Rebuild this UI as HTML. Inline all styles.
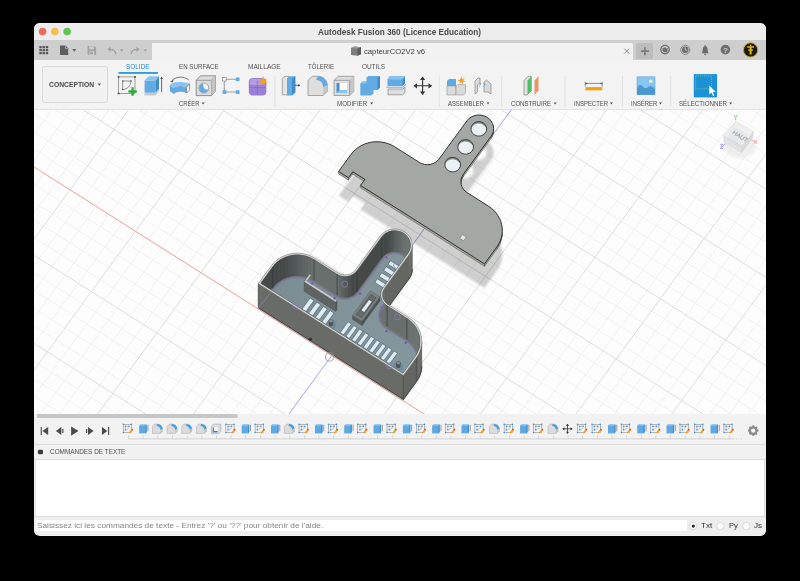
<!DOCTYPE html>
<html><head><meta charset="utf-8"><style>
*{margin:0;padding:0;box-sizing:border-box}
html,body{width:800px;height:581px;background:#000;overflow:hidden}
body{position:relative;font-family:"Liberation Sans",sans-serif}
.a{position:absolute}
.t{position:absolute;white-space:nowrap;transform-origin:0 0}
svg{position:absolute;left:0;top:0}
</style></head><body>
<div class="a" style="left:34px;top:23px;width:732px;height:512.5px;border-radius:6px;overflow:hidden;background:#f2f2f2"><div class="a" style="left:0px;top:0px;width:732px;height:17px;background:#eeedee"></div><div class="a" style="left:0px;top:17px;width:732px;height:19.5px;background:#cecece"></div><div class="a" style="left:117.6px;top:20.0px;width:481px;height:16.5px;background:#f2f2f2;border-radius:0 2px 0 0"></div><div class="a" style="left:602.3px;top:20.2px;width:16.6px;height:16.3px;background:#bdbdbd;border-radius:2px 2px 0 0"></div><div class="a" style="left:0px;top:36.5px;width:732px;height:50px;background:#f3f3f3"></div><div class="a" style="left:7.5px;top:43.4px;width:66.2px;height:36.9px;background:#f1f1f1;border:0.8px solid #dadada;border-radius:2.2px"></div><div class="a" style="left:0px;top:86.5px;width:732px;height:304.5px;background:#fdfdfd"></div><div class="a" style="left:0px;top:86px;width:732px;height:0.6px;background:#e2e2e2"></div><div class="a" style="left:0px;top:391px;width:732px;height:30px;background:#f2f2f2"></div><div class="a" style="left:2.5px;top:390.8px;width:201px;height:4.2px;background:#c6c6c6;border-radius:0 2px 2px 0"></div><div class="a" style="left:0px;top:421px;width:732px;height:15.5px;background:#f1f1f1;border-top:1px solid #dedede;border-bottom:1px solid #dadada"></div><div class="a" style="left:1px;top:436.5px;width:730px;height:57px;background:#ffffff;border-right:1px solid #d9d9d9;border-left:1px solid #e2e2e2"></div><div class="a" style="left:0px;top:493.3px;width:732px;height:19.2px;background:#eeeeee;border-top:1px solid #dcdcdc"></div><div class="a" style="left:1.5px;top:496.75px;width:651.5px;height:11.5px;background:#ffffff"></div></div><div class="t" style="left:318.10px;top:27.70px;font-size:8.5px;line-height:8.5px;color:#4b4b4b;font-weight:bold;transform:scaleX(0.9671);">Autodesk Fusion 360 (Licence Education)</div><div class="t" style="left:363.90px;top:48.08px;font-size:7.7px;line-height:7.7px;color:#3a3a3a;transform:scaleX(0.9998);">capteurCO2V2 v6</div><div class="t" style="left:49.00px;top:82.16px;font-size:6.9px;line-height:6.9px;color:#484848;font-weight:bold;transform:scaleX(0.9821);">CONCEPTION</div><div class="t" style="left:126.30px;top:64.31px;font-size:6.6px;line-height:6.6px;color:#1d8fd3;transform:scaleX(0.9743);">SOLIDE</div><div class="t" style="left:178.90px;top:64.31px;font-size:6.6px;line-height:6.6px;color:#505050;transform:scaleX(0.9437);">EN SURFACE</div><div class="t" style="left:247.70px;top:64.31px;font-size:6.6px;line-height:6.6px;color:#505050;transform:scaleX(0.9909);">MAILLAGE</div><div class="t" style="left:308.30px;top:64.31px;font-size:6.6px;line-height:6.6px;color:#505050;transform:scaleX(0.9204);">TÔLERIE</div><div class="t" style="left:361.50px;top:64.31px;font-size:6.6px;line-height:6.6px;color:#505050;transform:scaleX(0.9695);">OUTILS</div><div class="t" style="left:179.20px;top:100.51px;font-size:6.6px;line-height:6.6px;color:#505050;transform:scaleX(0.8874);">CRÉER</div><div class="t" style="left:336.70px;top:100.51px;font-size:6.6px;line-height:6.6px;color:#505050;transform:scaleX(0.9357);">MODIFIER</div><div class="t" style="left:448.20px;top:100.51px;font-size:6.6px;line-height:6.6px;color:#505050;transform:scaleX(0.8927);">ASSEMBLER</div><div class="t" style="left:510.50px;top:100.51px;font-size:6.6px;line-height:6.6px;color:#505050;transform:scaleX(0.9192);">CONSTRUIRE</div><div class="t" style="left:573.90px;top:100.51px;font-size:6.6px;line-height:6.6px;color:#505050;transform:scaleX(0.9033);">INSPECTER</div><div class="t" style="left:630.50px;top:100.51px;font-size:6.6px;line-height:6.6px;color:#505050;transform:scaleX(0.8921);">INSÉRER</div><div class="t" style="left:678.80px;top:100.51px;font-size:6.6px;line-height:6.6px;color:#505050;transform:scaleX(0.9348);">SÉLECTIONNER</div><div class="t" style="left:49.75px;top:449.17px;font-size:6.3px;line-height:6.3px;color:#4e4e4e;transform:scaleX(1.0177);">COMMANDES DE TEXTE</div><div class="t" style="left:36.75px;top:521.81px;font-size:7.9px;line-height:7.9px;color:#858585;transform:scaleX(1.0488);">Saisissez ici les commandes de texte - Entrez '?' ou '??' pour obtenir de l'aide.</div><div class="t" style="left:701.00px;top:522.00px;font-size:7.8px;line-height:7.8px;color:#333333;transform:scaleX(1.0422);">Txt</div><div class="t" style="left:728.60px;top:522.00px;font-size:7.8px;line-height:7.8px;color:#333333;transform:scaleX(0.9752);">Py</div><div class="t" style="left:753.75px;top:522.00px;font-size:7.8px;line-height:7.8px;color:#333333;transform:scaleX(1.0385);">Js</div>
<svg width="800" height="581" viewBox="0 0 800 581">
<defs>
<clipPath id="vpc"><rect x="34" y="86.4" width="732" height="304.6" transform="translate(0,23)"/></clipPath>
<filter id="blur3" x="-30%" y="-30%" width="160%" height="160%"><feGaussianBlur stdDeviation="1.8"/></filter>
<filter id="blur1u" x="-50%" y="-50%" width="200%" height="200%" filterUnits="objectBoundingBox"><feGaussianBlur stdDeviation="0.015"/></filter>
<filter id="blur2" x="-30%" y="-30%" width="160%" height="160%"><feGaussianBlur stdDeviation="1.1"/></filter>
<filter id="blur1" x="-30%" y="-30%" width="160%" height="160%"><feGaussianBlur stdDeviation="1.0"/></filter>
</defs>
<g clip-path="url(#vpc)"><path d="M195.3,-348.5L-421.7,496.2M173.4,-344.7L1089.5,235.1M208.4,-340.2L-408.6,504.5M164.6,-332.7L1080.6,247.2M221.4,-331.9L-395.5,512.8M155.7,-320.6L1071.8,259.3M234.5,-323.7L-382.4,521.1M146.9,-308.5L1063.0,271.3M260.7,-307.1L-356.3,537.6M129.3,-284.4L1045.4,295.5M273.8,-298.8L-343.2,545.9M120.5,-272.3L1036.6,307.5M286.9,-290.5L-330.1,554.2M111.7,-260.2L1027.8,319.6M300.0,-282.2L-317.0,562.5M102.9,-248.2L1018.9,331.7M326.1,-265.7L-290.8,579.0M85.2,-224.0L1001.3,355.8M339.2,-257.4L-277.7,587.3M76.4,-212.0L992.5,367.9M352.3,-249.1L-264.6,595.6M67.6,-199.9L983.7,379.9M365.4,-240.8L-251.6,603.9M58.8,-187.8L974.9,392.0M391.6,-224.3L-225.4,620.5M41.2,-163.7L957.2,416.1M404.7,-216.0L-212.3,628.7M32.4,-151.6L948.4,428.2M417.8,-207.7L-199.2,637.0M23.5,-139.6L939.6,440.3M430.8,-199.4L-186.1,645.3M14.7,-127.5L930.8,452.3M457.0,-182.8L-160.0,661.9M-2.9,-103.4L913.2,476.5M470.1,-174.6L-146.9,670.2M-11.7,-91.3L904.4,488.5M483.2,-166.3L-133.8,678.4M-20.5,-79.2L895.5,500.6M496.3,-158.0L-120.7,686.7M-29.3,-67.2L886.7,512.7M522.4,-141.4L-94.5,703.3M-47.0,-43.0L869.1,536.8M535.5,-133.1L-81.4,711.6M-55.8,-31.0L860.3,548.9M548.6,-124.8L-68.3,719.9M-64.6,-18.9L851.5,560.9M561.7,-116.6L-55.3,728.1M-73.4,-6.8L842.7,573.0M587.9,-100.0L-29.1,744.7M-91.0,17.3L825.0,597.1M601.0,-91.7L-16.0,753.0M-99.9,29.4L816.2,609.2M614.1,-83.4L-2.9,761.3M-108.7,41.4L807.4,621.3M627.1,-75.1L10.2,769.6M-117.5,53.5L798.6,633.3M653.3,-58.6L36.3,786.1M-135.1,77.6L781.0,657.5M666.4,-50.3L49.4,794.4M-143.9,89.7L772.2,669.5M679.5,-42.0L62.5,802.7M-152.7,101.8L763.3,681.6M692.6,-33.7L75.6,811.0M-161.6,113.8L754.5,693.7M718.7,-17.2L101.8,827.5M-179.2,138.0L736.9,717.8M731.8,-8.9L114.9,835.8M-188.0,150.0L728.1,729.9M744.9,-0.6L128.0,844.1M-196.8,162.1L719.3,741.9M758.0,7.7L141.0,852.4M-205.6,174.2L710.5,754.0M784.2,24.3L167.2,869.0M-223.2,198.3L692.8,778.1M797.3,32.5L180.3,877.2M-232.1,210.4L684.0,790.2M810.4,40.8L193.4,885.5M-240.9,222.4L675.2,802.3M823.4,49.1L206.5,893.8M-249.7,234.5L666.4,814.3M849.6,65.7L232.6,910.4M-267.3,258.6L648.8,838.5M862.7,74.0L245.7,918.7M-276.1,270.7L639.9,850.5M875.8,82.2L258.8,926.9M-284.9,282.8L631.1,862.6M888.9,90.5L271.9,935.2M-293.8,294.8L622.3,874.7M915.0,107.1L298.1,951.8M-311.4,319.0L604.7,898.8M928.1,115.4L311.2,960.1M-320.2,331.0L595.9,910.9M941.2,123.7L324.3,968.4M-329.0,343.1L587.1,923.0M954.3,131.9L337.3,976.6M-337.8,355.2L578.2,935.0M980.5,148.5L363.5,993.2M-355.5,379.3L560.6,959.2M993.6,156.8L376.6,1001.5M-364.3,391.4L551.8,971.2M1006.7,165.1L389.7,1009.8M-373.1,403.4L543.0,983.3M1019.7,173.4L402.8,1018.1M-381.9,415.5L534.2,995.4M1045.9,189.9L429.0,1034.6M-399.5,439.7L516.6,1019.5M1059.0,198.2L442.0,1042.9M-408.3,451.7L507.7,1031.6M1072.1,206.5L455.1,1051.2M-417.2,463.8L498.9,1043.6M1085.2,214.8L468.2,1059.5M-426.0,475.9L490.1,1055.7" stroke="#efefef" stroke-width="0.9" fill="none"/><path d="M182.2,-356.8L-434.8,487.9M182.2,-356.8L1098.3,223.1M247.6,-315.4L-369.3,529.3M138.1,-296.4L1054.2,283.4M313.1,-274.0L-303.9,570.8M94.1,-236.1L1010.1,343.7M378.5,-232.5L-238.5,612.2M50.0,-175.8L966.1,404.1M443.9,-191.1L-173.0,653.6M5.9,-115.4L922.0,464.4M509.4,-149.7L-107.6,695.0M-38.2,-55.1L877.9,524.7M574.8,-108.3L-42.2,736.4M-82.2,5.2L833.8,585.1M640.2,-66.9L23.3,777.8M-126.3,65.6L789.8,645.4M705.7,-25.4L88.7,819.3M-170.4,125.9L745.7,705.7M771.1,16.0L154.1,860.7M-214.4,186.2L701.6,766.1M836.5,57.4L219.6,902.1M-258.5,246.6L657.6,826.4M902.0,98.8L285.0,943.5M-302.6,306.9L613.5,886.7M967.4,140.2L350.4,984.9M-346.6,367.2L569.4,947.1M1032.8,181.6L415.9,1026.3M-390.7,427.6L525.4,1007.4M1098.3,223.1L481.3,1067.8M-434.8,487.9L481.3,1067.8" stroke="#dddddd" stroke-width="1.0" fill="none"/><line x1="-191.7" y1="24.1" x2="331.7" y2="355.5" stroke="#f5a9a4" stroke-width="1.0"/><line x1="331.7" y1="355.5" x2="684.3" y2="-127.2" stroke="#a9a6f0" stroke-width="0.9"/><line x1="331.7" y1="355.5" x2="199.5" y2="536.5" stroke="#a9a6f0" stroke-width="0.9"/><line x1="331.7" y1="355.5" x2="855.2" y2="686.8" stroke="#f5a9a4" stroke-width="1.0"/><path d="M338.6,195.5 348.4,201.7 352.8,195.7 364.9,203.4 360.5,209.4 484.5,287.9 496.9,270.8 498.7,268.0 500.2,265.0 501.3,261.9 502.0,258.7 502.3,255.4 502.2,252.1 501.7,248.9 500.9,245.7 499.6,242.6 498.0,239.7 496.0,236.9 493.8,234.4 491.2,232.1 488.4,230.1 467.1,216.6 465.0,215.0 463.2,213.0 461.9,210.7 461.1,208.2 460.9,205.6 461.1,203.0 462.0,200.6 463.3,198.3 491.1,160.2 492.5,157.9 493.3,155.3 493.6,152.7 493.4,150.0 492.5,147.5 491.2,145.1 489.4,143.1 487.2,141.4 484.7,140.1 481.9,139.3 479.1,139.0 476.2,139.2 473.5,140.0 471.0,141.2 468.7,142.8 466.9,144.9 439.1,183.0 437.3,185.0 435.1,186.6 432.7,187.8 430.0,188.5 427.2,188.7 424.5,188.4 421.8,187.6 419.4,186.4 394.8,170.9 391.8,169.2 388.6,167.8 385.2,166.8 381.7,166.1 378.2,165.8 374.7,165.8 371.2,166.2 367.7,167.0 364.4,168.1 361.3,169.6 358.3,171.4 355.6,173.5 353.2,175.8 351.0,178.4Z" fill="#000" stroke="none" stroke-width="0" filter="url(#blur2)" opacity="0.18"/><g transform="matrix(65.434,41.417,-44.069,60.336,331.743,355.486)"><circle cx="-0.01" cy="-3.352" r="0.1" fill="#fafafa" filter="url(#blur1u)"/></g><g transform="matrix(65.434,41.417,-44.069,60.336,331.743,355.486)"><circle cx="-0.01" cy="-3.053" r="0.1" fill="#fafafa" filter="url(#blur1u)"/></g><g transform="matrix(65.434,41.417,-44.069,60.336,331.743,355.486)"><circle cx="-0.01" cy="-2.759" r="0.1" fill="#fafafa" filter="url(#blur1u)"/></g><path d="M493.3,131.3 493.6,128.7 493.6,131.1 493.3,133.7Z" fill="#aaa89e" stroke="#3a3c3a" stroke-width="0.45" /><path d="M492.5,133.9 493.3,131.3 493.3,133.7 492.5,136.3Z" fill="#aaa89e" stroke="#3a3c3a" stroke-width="0.45" /><path d="M491.1,136.2 492.5,133.9 492.5,136.3 491.1,138.6Z" fill="#aaa89e" stroke="#3a3c3a" stroke-width="0.45" /><path d="M463.3,174.3 491.1,136.2 491.1,138.6 463.3,176.7Z" fill="#aaa89e" stroke="#3a3c3a" stroke-width="0.45" /><path d="M462.0,176.6 463.3,174.3 463.3,176.7 462.0,179.0Z" fill="#aaa89e" stroke="#3a3c3a" stroke-width="0.45" /><path d="M338.6,171.5 348.4,177.7 348.4,180.1 338.6,173.9Z" fill="#aaa89e" stroke="#3a3c3a" stroke-width="0.45" /><path d="M348.4,177.7 352.8,171.7 352.8,174.1 348.4,180.1Z" fill="#aaa89e" stroke="#3a3c3a" stroke-width="0.45" /><path d="M352.8,171.7 364.9,179.4 364.9,181.8 352.8,174.1Z" fill="#aaa89e" stroke="#3a3c3a" stroke-width="0.45" /><path d="M461.1,179.0 462.0,176.6 462.0,179.0 461.1,181.4Z" fill="#aaa89e" stroke="#3a3c3a" stroke-width="0.45" /><path d="M460.9,181.6 461.1,179.0 461.1,181.4 460.9,184.0Z" fill="#aaa89e" stroke="#3a3c3a" stroke-width="0.45" /><path d="M360.5,185.4 484.5,263.9 484.5,266.3 360.5,187.8Z" fill="#aaa89e" stroke="#3a3c3a" stroke-width="0.45" /><path d="M502.0,234.7 502.3,231.4 502.3,233.8 502.0,237.1Z" fill="#aaa89e" stroke="#3a3c3a" stroke-width="0.45" /><path d="M501.3,237.9 502.0,234.7 502.0,237.1 501.3,240.3Z" fill="#aaa89e" stroke="#3a3c3a" stroke-width="0.45" /><path d="M500.2,241.0 501.3,237.9 501.3,240.3 500.2,243.4Z" fill="#aaa89e" stroke="#3a3c3a" stroke-width="0.45" /><path d="M498.7,244.0 500.2,241.0 500.2,243.4 498.7,246.4Z" fill="#aaa89e" stroke="#3a3c3a" stroke-width="0.45" /><path d="M496.9,246.8 498.7,244.0 498.7,246.4 496.9,249.2Z" fill="#aaa89e" stroke="#3a3c3a" stroke-width="0.45" /><path d="M484.5,263.9 496.9,246.8 496.9,249.2 484.5,266.3Z" fill="#aaa89e" stroke="#3a3c3a" stroke-width="0.45" /><path d="M338.6,171.5 348.4,177.7 352.8,171.7 364.9,179.4 360.5,185.4 484.5,263.9 496.9,246.8 498.7,244.0 500.2,241.0 501.3,237.9 502.0,234.7 502.3,231.4 502.2,228.1 501.7,224.9 500.9,221.7 499.6,218.6 498.0,215.7 496.0,212.9 493.8,210.4 491.2,208.1 488.4,206.1 467.1,192.6 465.0,191.0 463.2,189.0 461.9,186.7 461.1,184.2 460.9,181.6 461.1,179.0 462.0,176.6 463.3,174.3 491.1,136.2 492.5,133.9 493.3,131.3 493.6,128.7 493.4,126.0 492.5,123.5 491.2,121.1 489.4,119.1 487.2,117.4 484.7,116.1 481.9,115.3 479.1,115.0 476.2,115.2 473.5,116.0 471.0,117.2 468.7,118.8 466.9,120.9 439.1,159.0 437.3,161.0 435.1,162.6 432.7,163.8 430.0,164.5 427.2,164.7 424.5,164.4 421.8,163.6 419.4,162.4 394.8,146.9 391.8,145.2 388.6,143.8 385.2,142.8 381.7,142.1 378.2,141.8 374.7,141.8 371.2,142.2 367.7,143.0 364.4,144.1 361.3,145.6 358.3,147.4 355.6,149.5 353.2,151.8 351.0,154.4Z" fill="#a4a8a5" stroke="#333634" stroke-width="1.0" /><path d="M462.3,234.6 466.2,237.1 463.6,240.7 459.7,238.2Z" fill="#dfe8ee" stroke="#5a5e5c" stroke-width="0.45" /><clipPath id="hc3352"><circle cx="-0.01" cy="-3.352" r="0.1" transform="matrix(65.434,41.417,-44.069,60.336,331.743,331.486)"/></clipPath><g transform="matrix(65.434,41.417,-44.069,60.336,331.743,331.486)"><circle cx="-0.01" cy="-3.352" r="0.1" fill="#7b7f7d"/></g><g clip-path="url(#hc3352)"><g transform="translate(0,1.9)"><g transform="matrix(65.434,41.417,-44.069,60.336,331.743,331.486)"><circle cx="-0.01" cy="-3.352" r="0.1" fill="#eaf1f5"/></g></g></g><g transform="matrix(65.434,41.417,-44.069,60.336,331.743,331.486)"><circle cx="-0.01" cy="-3.352" r="0.1" fill="none" stroke="#3a3d3b" stroke-width="0.011"/></g><clipPath id="hc3053"><circle cx="-0.01" cy="-3.053" r="0.1" transform="matrix(65.434,41.417,-44.069,60.336,331.743,331.486)"/></clipPath><g transform="matrix(65.434,41.417,-44.069,60.336,331.743,331.486)"><circle cx="-0.01" cy="-3.053" r="0.1" fill="#7b7f7d"/></g><g clip-path="url(#hc3053)"><g transform="translate(0,1.9)"><g transform="matrix(65.434,41.417,-44.069,60.336,331.743,331.486)"><circle cx="-0.01" cy="-3.053" r="0.1" fill="#eaf1f5"/></g></g></g><g transform="matrix(65.434,41.417,-44.069,60.336,331.743,331.486)"><circle cx="-0.01" cy="-3.053" r="0.1" fill="none" stroke="#3a3d3b" stroke-width="0.011"/></g><clipPath id="hc2759"><circle cx="-0.01" cy="-2.759" r="0.1" transform="matrix(65.434,41.417,-44.069,60.336,331.743,331.486)"/></clipPath><g transform="matrix(65.434,41.417,-44.069,60.336,331.743,331.486)"><circle cx="-0.01" cy="-2.759" r="0.1" fill="#7b7f7d"/></g><g clip-path="url(#hc2759)"><g transform="translate(0,1.9)"><g transform="matrix(65.434,41.417,-44.069,60.336,331.743,331.486)"><circle cx="-0.01" cy="-2.759" r="0.1" fill="#eaf1f5"/></g></g></g><g transform="matrix(65.434,41.417,-44.069,60.336,331.743,331.486)"><circle cx="-0.01" cy="-2.759" r="0.1" fill="none" stroke="#3a3d3b" stroke-width="0.011"/></g><path d="M258.3,308.7 403.4,400.5 416.4,382.7 418.2,379.9 419.7,376.9 420.8,373.8 421.5,370.6 421.8,367.3 421.7,364.1 421.2,360.8 420.3,357.6 419.1,354.5 417.5,351.6 415.5,348.8 413.2,346.3 410.7,344.0 407.9,342.0 388.0,329.5 386.1,328.0 384.6,326.2 383.4,324.2 382.7,322.0 382.5,319.7 382.7,317.4 383.4,315.2 384.6,313.2 409.3,279.4 410.9,276.6 411.9,273.6 412.3,270.4 412.0,267.2 411.0,264.2 409.4,261.3 407.2,258.9 404.5,256.8 401.5,255.3 398.2,254.3 394.8,254.0 391.4,254.2 388.1,255.1 385.1,256.6 382.4,258.6 380.2,261.0 355.6,294.8 354.0,296.6 352.1,298.0 349.9,299.0 347.5,299.7 345.0,299.9 342.6,299.6 340.2,298.9 338.0,297.8 315.1,283.3 312.0,281.6 308.8,280.2 305.4,279.2 302.0,278.5 298.4,278.2 294.9,278.2 291.4,278.6 288.0,279.4 284.7,280.6 281.5,282.0 278.6,283.8 275.8,285.9 273.4,288.3 271.3,290.9Z" fill="#000" stroke="none" stroke-width="0" filter="url(#blur1)" opacity="0.18"/><path d="M411.9,248.6 412.3,245.4 412.3,269.4 411.9,272.6Z" fill="#646661" stroke="#646661" stroke-width="0.4" /><path d="M410.9,251.6 411.9,248.6 411.9,272.6 410.9,275.6Z" fill="#646661" stroke="#646661" stroke-width="0.4" /><path d="M409.3,254.4 410.9,251.6 410.9,275.6 409.3,278.4Z" fill="#646661" stroke="#646661" stroke-width="0.4" /><path d="M384.6,288.2 409.3,254.4 409.3,278.4 384.6,312.2Z" fill="#646661" stroke="#646661" stroke-width="0.4" /><path d="M383.4,290.2 384.6,288.2 384.6,312.2 383.4,314.2Z" fill="#646661" stroke="#646661" stroke-width="0.4" /><path d="M382.7,292.4 383.4,290.2 383.4,314.2 382.7,316.4Z" fill="#646661" stroke="#646661" stroke-width="0.4" /><path d="M382.5,294.7 382.7,292.4 382.7,316.4 382.5,318.7Z" fill="#646661" stroke="#646661" stroke-width="0.4" /><path d="M258.3,283.7 403.4,375.5 403.4,399.5 258.3,307.7Z" fill="#686b66" stroke="#686b66" stroke-width="0.4" /><path d="M421.5,345.6 421.8,342.3 421.8,366.3 421.5,369.6Z" fill="#646661" stroke="#646661" stroke-width="0.4" /><path d="M420.8,348.8 421.5,345.6 421.5,369.6 420.8,372.8Z" fill="#646661" stroke="#646661" stroke-width="0.4" /><path d="M419.7,351.9 420.8,348.8 420.8,372.8 419.7,375.9Z" fill="#646661" stroke="#646661" stroke-width="0.4" /><path d="M418.2,354.9 419.7,351.9 419.7,375.9 418.2,378.9Z" fill="#646661" stroke="#646661" stroke-width="0.4" /><path d="M416.4,357.7 418.2,354.9 418.2,378.9 416.4,381.7Z" fill="#646661" stroke="#646661" stroke-width="0.4" /><path d="M403.4,375.5 416.4,357.7 416.4,381.7 403.4,399.5Z" fill="#646661" stroke="#646661" stroke-width="0.4" /><path d="M411.9,272.6L412.3,269.4M410.9,275.6L411.9,272.6M409.3,278.4L410.9,275.6M384.6,312.2L409.3,278.4M383.4,314.2L384.6,312.2M382.7,316.4L383.4,314.2M382.5,318.7L382.7,316.4M258.3,307.7L403.4,399.5M421.5,369.6L421.8,366.3M420.8,372.8L421.5,369.6M419.7,375.9L420.8,372.8M418.2,378.9L419.7,375.9M416.4,381.7L418.2,378.9M403.4,399.5L416.4,381.7" stroke="#3a3c3a" stroke-width="0.9" fill="none"/><path d="M258.3,307.7L258.3,283.7" stroke="#3b3e3c" stroke-width="0.6"/><path d="M403.4,399.5L403.4,375.5" stroke="#3b3e3c" stroke-width="0.6"/><path d="M416.4,381.7L416.4,357.7" stroke="#3b3e3c" stroke-width="0.6"/><path d="M258.3,283.7 403.4,375.5 416.4,357.7 418.2,354.9 419.7,351.9 420.8,348.8 421.5,345.6 421.8,342.3 421.7,339.1 421.2,335.8 420.3,332.6 419.1,329.5 417.5,326.6 415.5,323.8 413.2,321.3 410.7,319.0 407.9,317.0 388.0,304.5 386.1,303.0 384.6,301.2 383.4,299.2 382.7,297.0 382.5,294.7 382.7,292.4 383.4,290.2 384.6,288.2 409.3,254.4 410.9,251.6 411.9,248.6 412.3,245.4 412.0,242.2 411.0,239.2 409.4,236.3 407.2,233.9 404.5,231.8 401.5,230.3 398.2,229.3 394.8,229.0 391.4,229.2 388.1,230.1 385.1,231.6 382.4,233.6 380.2,236.0 355.6,269.8 354.0,271.6 352.1,273.0 349.9,274.0 347.5,274.7 345.0,274.9 342.6,274.6 340.2,273.9 338.0,272.8 315.1,258.3 312.0,256.6 308.8,255.2 305.4,254.2 302.0,253.5 298.4,253.2 294.9,253.2 291.4,253.6 288.0,254.4 284.7,255.6 281.5,257.0 278.6,258.8 275.8,260.9 273.4,263.3 271.3,265.9Z" fill="#dcddd6" stroke="none" stroke-width="0" /><path d="M260.7,283.2 402.9,373.3 415.0,356.8 416.7,354.2 418.0,351.3 419.1,348.4 419.7,345.4 420.0,342.3 420.0,339.2 419.5,336.1 418.7,333.1 417.5,330.2 416.0,327.4 414.1,324.8 412.0,322.4 409.5,320.2 406.9,318.3 387.1,305.8 384.9,304.1 383.1,302.1 381.8,299.8 381.0,297.2 380.7,294.6 381.0,292.1 381.8,289.6 383.2,287.3 407.8,253.5 409.3,251.0 410.2,248.2 410.5,245.4 410.2,242.5 409.4,239.8 407.9,237.2 406.0,235.0 403.6,233.1 400.9,231.8 397.9,230.9 394.8,230.6 391.7,230.8 388.8,231.6 386.0,232.9 383.6,234.7 381.7,236.9 357.0,270.7 355.2,272.7 353.0,274.3 350.5,275.5 347.8,276.3 345.0,276.5 342.2,276.2 339.5,275.4 337.1,274.2 314.1,259.6 311.2,258.0 308.2,256.7 305.0,255.7 301.7,255.1 298.4,254.8 295.0,254.8 291.7,255.2 288.5,256.0 285.4,257.0 282.4,258.4 279.6,260.1 277.0,262.1 274.7,264.3 272.7,266.8Z" fill="#757a79" stroke="none" stroke-width="0" /><clipPath id="trayin"><path d="M260.7,283.2 402.9,373.3 415.0,356.8 416.7,354.2 418.0,351.3 419.1,348.4 419.7,345.4 420.0,342.3 420.0,339.2 419.5,336.1 418.7,333.1 417.5,330.2 416.0,327.4 414.1,324.8 412.0,322.4 409.5,320.2 406.9,318.3 387.1,305.8 384.9,304.1 383.1,302.1 381.8,299.8 381.0,297.2 380.7,294.6 381.0,292.1 381.8,289.6 383.2,287.3 407.8,253.5 409.3,251.0 410.2,248.2 410.5,245.4 410.2,242.5 409.4,239.8 407.9,237.2 406.0,235.0 403.6,233.1 400.9,231.8 397.9,230.9 394.8,230.6 391.7,230.8 388.8,231.6 386.0,232.9 383.6,234.7 381.7,236.9 357.0,270.7 355.2,272.7 353.0,274.3 350.5,275.5 347.8,276.3 345.0,276.5 342.2,276.2 339.5,275.4 337.1,274.2 314.1,259.6 311.2,258.0 308.2,256.7 305.0,255.7 301.7,255.1 298.4,254.8 295.0,254.8 291.7,255.2 288.5,256.0 285.4,257.0 282.4,258.4 279.6,260.1 277.0,262.1 274.7,264.3 272.7,266.8Z"/></clipPath><g clip-path="url(#trayin)"><path d="M394.8,230.6 391.7,230.8 391.7,251.8 394.8,251.6Z" fill="#535857" stroke="#535857" stroke-width="0.4" /><path d="M397.9,230.9 394.8,230.6 394.8,251.6 397.9,251.9Z" fill="#5a605e" stroke="#5a605e" stroke-width="0.4" /><path d="M391.7,230.8 388.8,231.6 388.8,252.6 391.7,251.8Z" fill="#4b504f" stroke="#4b504f" stroke-width="0.4" /><path d="M400.9,231.8 397.9,230.9 397.9,251.9 400.9,252.8Z" fill="#606765" stroke="#606765" stroke-width="0.4" /><path d="M388.8,231.6 386.0,232.9 386.0,253.9 388.8,252.6Z" fill="#454a49" stroke="#454a49" stroke-width="0.4" /><path d="M403.6,233.1 400.9,231.8 400.9,252.8 403.6,254.1Z" fill="#656d6b" stroke="#656d6b" stroke-width="0.4" /><path d="M386.0,232.9 383.6,234.7 383.6,255.7 386.0,253.9Z" fill="#454a49" stroke="#454a49" stroke-width="0.4" /><path d="M406.0,235.0 403.6,233.1 403.6,254.1 406.0,256.0Z" fill="#69716f" stroke="#69716f" stroke-width="0.4" /><path d="M383.6,234.7 381.7,236.9 381.7,257.9 383.6,255.7Z" fill="#454a49" stroke="#454a49" stroke-width="0.4" /><path d="M407.9,237.2 406.0,235.0 406.0,256.0 407.9,258.2Z" fill="#6c7472" stroke="#6c7472" stroke-width="0.4" /><path d="M409.4,239.8 407.9,237.2 407.9,258.2 409.4,260.8Z" fill="#6d7573" stroke="#6d7573" stroke-width="0.4" /><path d="M410.2,242.5 409.4,239.8 409.4,260.8 410.2,263.5Z" fill="#6d7573" stroke="#6d7573" stroke-width="0.4" /><path d="M410.5,245.4 410.2,242.5 410.2,263.5 410.5,266.4Z" fill="#6b7371" stroke="#6b7371" stroke-width="0.4" /><path d="M381.7,236.9 357.0,270.7 357.0,291.7 381.7,257.9Z" fill="#454a49" stroke="#454a49" stroke-width="0.4" /><path d="M298.4,254.8 295.0,254.8 295.0,275.8 298.4,275.8Z" fill="#555b5a" stroke="#555b5a" stroke-width="0.4" /><path d="M301.7,255.1 298.4,254.8 298.4,275.8 301.7,276.1Z" fill="#59605e" stroke="#59605e" stroke-width="0.4" /><path d="M295.0,254.8 291.7,255.2 291.7,276.2 295.0,275.8Z" fill="#515755" stroke="#515755" stroke-width="0.4" /><path d="M305.0,255.7 301.7,255.1 301.7,276.1 305.0,276.7Z" fill="#5d6462" stroke="#5d6462" stroke-width="0.4" /><path d="M291.7,255.2 288.5,256.0 288.5,277.0 291.7,276.2Z" fill="#4d5251" stroke="#4d5251" stroke-width="0.4" /><path d="M308.2,256.7 305.0,255.7 305.0,276.7 308.2,277.7Z" fill="#606766" stroke="#606766" stroke-width="0.4" /><path d="M288.5,256.0 285.4,257.0 285.4,278.0 288.5,277.0Z" fill="#484d4c" stroke="#484d4c" stroke-width="0.4" /><path d="M311.2,258.0 308.2,256.7 308.2,277.7 311.2,279.0Z" fill="#646b69" stroke="#646b69" stroke-width="0.4" /><path d="M285.4,257.0 282.4,258.4 282.4,279.4 285.4,278.0Z" fill="#454a49" stroke="#454a49" stroke-width="0.4" /><path d="M314.1,259.6 311.2,258.0 311.2,279.0 314.1,280.6Z" fill="#666e6c" stroke="#666e6c" stroke-width="0.4" /><path d="M282.4,258.4 279.6,260.1 279.6,281.1 282.4,279.4Z" fill="#454a49" stroke="#454a49" stroke-width="0.4" /><path d="M279.6,260.1 277.0,262.1 277.0,283.1 279.6,281.1Z" fill="#454a49" stroke="#454a49" stroke-width="0.4" /><path d="M277.0,262.1 274.7,264.3 274.7,285.3 277.0,283.1Z" fill="#454a49" stroke="#454a49" stroke-width="0.4" /><path d="M274.7,264.3 272.7,266.8 272.7,287.8 274.7,285.3Z" fill="#454a49" stroke="#454a49" stroke-width="0.4" /><path d="M337.1,274.2 314.1,259.6 314.1,280.6 337.1,295.2Z" fill="#686f6d" stroke="#686f6d" stroke-width="0.4" /><path d="M357.0,270.7 355.2,272.7 355.2,293.7 357.0,291.7Z" fill="#454a49" stroke="#454a49" stroke-width="0.4" /><path d="M355.2,272.7 353.0,274.3 353.0,295.3 355.2,293.7Z" fill="#454a49" stroke="#454a49" stroke-width="0.4" /><path d="M339.5,275.4 337.1,274.2 337.1,295.2 339.5,296.4Z" fill="#656d6b" stroke="#656d6b" stroke-width="0.4" /><path d="M353.0,274.3 350.5,275.5 350.5,296.5 353.0,295.3Z" fill="#454a49" stroke="#454a49" stroke-width="0.4" /><path d="M272.7,266.8 260.7,283.2 260.7,304.2 272.7,287.8Z" fill="#454a49" stroke="#454a49" stroke-width="0.4" /><path d="M342.2,276.2 339.5,275.4 339.5,296.4 342.2,297.2Z" fill="#606765" stroke="#606765" stroke-width="0.4" /><path d="M350.5,275.5 347.8,276.3 347.8,297.3 350.5,296.5Z" fill="#4b504f" stroke="#4b504f" stroke-width="0.4" /><path d="M345.0,276.5 342.2,276.2 342.2,297.2 345.0,297.5Z" fill="#5a605e" stroke="#5a605e" stroke-width="0.4" /><path d="M347.8,276.3 345.0,276.5 345.0,297.5 347.8,297.3Z" fill="#535857" stroke="#535857" stroke-width="0.4" /><path d="M381.0,297.2 380.7,294.6 380.7,315.6 381.0,318.2Z" fill="#6b7371" stroke="#6b7371" stroke-width="0.4" /><path d="M381.8,299.8 381.0,297.2 381.0,318.2 381.8,320.8Z" fill="#6d7573" stroke="#6d7573" stroke-width="0.4" /><path d="M383.1,302.1 381.8,299.8 381.8,320.8 383.1,323.1Z" fill="#6d7573" stroke="#6d7573" stroke-width="0.4" /><path d="M384.9,304.1 383.1,302.1 383.1,323.1 384.9,325.1Z" fill="#6c7472" stroke="#6c7472" stroke-width="0.4" /><path d="M387.1,305.8 384.9,304.1 384.9,325.1 387.1,326.8Z" fill="#69716f" stroke="#69716f" stroke-width="0.4" /><path d="M406.9,318.3 387.1,305.8 387.1,326.8 406.9,339.3Z" fill="#686f6d" stroke="#686f6d" stroke-width="0.4" /><path d="M409.5,320.2 406.9,318.3 406.9,339.3 409.5,341.2Z" fill="#69706e" stroke="#69706e" stroke-width="0.4" /><path d="M412.0,322.4 409.5,320.2 409.5,341.2 412.0,343.4Z" fill="#6b7270" stroke="#6b7270" stroke-width="0.4" /><path d="M414.1,324.8 412.0,322.4 412.0,343.4 414.1,345.8Z" fill="#6c7472" stroke="#6c7472" stroke-width="0.4" /><path d="M416.0,327.4 414.1,324.8 414.1,345.8 416.0,348.4Z" fill="#6d7573" stroke="#6d7573" stroke-width="0.4" /><path d="M417.5,330.2 416.0,327.4 416.0,348.4 417.5,351.2Z" fill="#6d7573" stroke="#6d7573" stroke-width="0.4" /><path d="M418.7,333.1 417.5,330.2 417.5,351.2 418.7,354.1Z" fill="#6d7573" stroke="#6d7573" stroke-width="0.4" /><path d="M419.5,336.1 418.7,333.1 418.7,354.1 419.5,357.1Z" fill="#6d7472" stroke="#6d7472" stroke-width="0.4" /><path d="M420.0,339.2 419.5,336.1 419.5,357.1 420.0,360.2Z" fill="#6b7371" stroke="#6b7371" stroke-width="0.4" /><path d="M420.0,342.3 420.0,339.2 420.0,360.2 420.0,363.3Z" fill="#6a7170" stroke="#6a7170" stroke-width="0.4" /><path d="M272.7,287.8L272.7,266.8M314.1,280.6L314.1,259.6M337.1,295.2L337.1,274.2M357.0,291.7L357.0,270.7M381.7,257.9L381.7,236.9M407.8,274.5L407.8,253.5M406.9,339.3L406.9,318.3M387.1,326.8L387.1,305.8" stroke="#2f3433" stroke-width="0.6" fill="none"/><linearGradient id="flg" gradientUnits="userSpaceOnUse" x1="270" y1="280" x2="410" y2="360"><stop offset="0" stop-color="#788c92"/><stop offset="0.5" stop-color="#80949a"/><stop offset="1" stop-color="#82969b"/></linearGradient><path d="M263.7,303.7 402.3,391.4 413.1,376.6 414.7,374.2 416.0,371.6 416.9,368.9 417.6,366.1 417.8,363.2 417.7,360.3 417.3,357.5 416.6,354.7 415.5,352.0 414.1,349.4 412.3,347.0 410.4,344.8 408.1,342.8 405.7,341.0 385.8,328.5 383.3,326.5 381.3,324.2 379.7,321.5 378.8,318.6 378.5,315.6 378.8,312.6 379.8,309.8 381.3,307.1 406.0,273.3 407.3,271.2 408.1,268.8 408.3,266.4 408.1,263.9 407.3,261.5 406.1,259.3 404.4,257.4 402.3,255.8 400.0,254.6 397.5,253.9 394.8,253.6 392.2,253.8 389.6,254.5 387.3,255.7 385.2,257.2 383.5,259.1 358.8,292.9 356.8,295.2 354.2,297.1 351.4,298.4 348.3,299.3 345.0,299.5 341.8,299.2 338.7,298.3 335.8,296.8 312.9,282.3 310.2,280.8 307.4,279.6 304.4,278.7 301.4,278.1 298.3,277.8 295.2,277.9 292.2,278.2 289.2,278.9 286.3,279.9 283.5,281.2 280.9,282.8 278.5,284.6 276.4,286.7 274.5,288.9Z" fill="url(#flg)" stroke="none" stroke-width="0" /><path d="M263.7,303.7 402.3,391.4 413.1,376.6 414.7,374.2 416.0,371.6 416.9,368.9 417.6,366.1 417.8,363.2 417.7,360.3 417.3,357.5 416.6,354.7 415.5,352.0 414.1,349.4 412.3,347.0 410.4,344.8 408.1,342.8 405.7,341.0 385.8,328.5 383.3,326.5 381.3,324.2 379.7,321.5 378.8,318.6 378.5,315.6 378.8,312.6 379.8,309.8 381.3,307.1 406.0,273.3 407.3,271.2 408.1,268.8 408.3,266.4 408.1,263.9 407.3,261.5 406.1,259.3 404.4,257.4 402.3,255.8 400.0,254.6 397.5,253.9 394.8,253.6 392.2,253.8 389.6,254.5 387.3,255.7 385.2,257.2 383.5,259.1 358.8,292.9 356.8,295.2 354.2,297.1 351.4,298.4 348.3,299.3 345.0,299.5 341.8,299.2 338.7,298.3 335.8,296.8 312.9,282.3 310.2,280.8 307.4,279.6 304.4,278.7 301.4,278.1 298.3,277.8 295.2,277.9 292.2,278.2 289.2,278.9 286.3,279.9 283.5,281.2 280.9,282.8 278.5,284.6 276.4,286.7 274.5,288.9Z" fill="none" stroke="#8a74c4" stroke-width="0.7"/><path d="M310.1,298.0 314.0,300.5 305.9,311.6 302.0,309.1Z" fill="#dcedf6" stroke="#3f4a50" stroke-width="0.55" /><path d="M316.8,302.2 320.7,304.7 312.5,315.8 308.6,313.3Z" fill="#dcedf6" stroke="#3f4a50" stroke-width="0.55" /><path d="M323.4,306.4 327.3,308.9 319.2,320.0 315.3,317.6Z" fill="#dcedf6" stroke="#3f4a50" stroke-width="0.55" /><path d="M330.1,310.6 334.0,313.1 325.8,324.3 321.9,321.8Z" fill="#dcedf6" stroke="#3f4a50" stroke-width="0.55" /><path d="M348.1,321.8 351.5,324.0 343.6,334.8 340.1,332.7Z" fill="#dcedf6" stroke="#3f4a50" stroke-width="0.55" /><path d="M353.8,325.5 357.2,327.6 349.3,338.5 345.9,336.3Z" fill="#dcedf6" stroke="#3f4a50" stroke-width="0.55" /><path d="M359.6,329.1 363.0,331.3 355.1,342.1 351.7,340.0Z" fill="#dcedf6" stroke="#3f4a50" stroke-width="0.55" /><path d="M365.4,332.8 368.8,334.9 360.8,345.8 357.4,343.6Z" fill="#dcedf6" stroke="#3f4a50" stroke-width="0.55" /><path d="M371.1,336.4 374.5,338.6 366.6,349.4 363.2,347.3Z" fill="#dcedf6" stroke="#3f4a50" stroke-width="0.55" /><path d="M376.9,340.1 380.3,342.2 372.3,353.1 368.9,350.9Z" fill="#dcedf6" stroke="#3f4a50" stroke-width="0.55" /><path d="M382.6,343.7 386.0,345.9 378.1,356.7 374.7,354.6Z" fill="#dcedf6" stroke="#3f4a50" stroke-width="0.55" /><path d="M388.4,347.3 391.8,349.5 383.9,360.4 380.5,358.2Z" fill="#dcedf6" stroke="#3f4a50" stroke-width="0.55" /><path d="M394.1,351.0 397.5,353.1 389.6,364.0 386.2,361.8Z" fill="#dcedf6" stroke="#3f4a50" stroke-width="0.55" /><path d="M390.6,260.7 403.1,268.6 400.4,272.2 388.0,264.3Z" fill="#dcedf6" stroke="#3f4a50" stroke-width="0.55" /><path d="M386.2,266.7 398.6,274.6 396.0,278.2 383.6,270.4Z" fill="#dcedf6" stroke="#3f4a50" stroke-width="0.55" /><path d="M381.8,272.8 394.2,280.6 391.6,284.3 379.2,276.4Z" fill="#dcedf6" stroke="#3f4a50" stroke-width="0.55" /><path d="M377.4,278.8 389.8,286.7 387.2,290.3 374.8,282.4Z" fill="#dcedf6" stroke="#3f4a50" stroke-width="0.55" /><path d="M309.7,274.1 311.3,275.1 306.9,281.2 305.3,280.1Z" fill="#cfd2cc" stroke="#3e4341" stroke-width="0.3" /><path d="M337.0,300.2 335.8,301.9 335.8,311.4 337.0,309.7Z" fill="#5c6160" stroke="#3e4341" stroke-width="0.3" /><path d="M304.1,281.8 335.8,301.9 335.8,311.4 304.1,291.3Z" fill="#5f6463" stroke="#3e4341" stroke-width="0.3" /><path d="M305.3,280.1 337.0,300.2 335.8,301.9 304.1,281.8Z" fill="#d0d3cd" stroke="#3e4341" stroke-width="0.3" /><path d="M380.0,296.8 362.0,321.5 362.0,325.5 380.0,300.8Z" fill="#4c5152" stroke="#3e4341" stroke-width="0.3" /><path d="M352.5,315.5 362.0,321.5 362.0,325.5 352.5,319.5Z" fill="#595e5f" stroke="#3e4341" stroke-width="0.3" /><path d="M370.5,290.8 380.0,296.8 362.0,321.5 352.5,315.5Z" fill="#7b8081" stroke="#3e4341" stroke-width="0.3" /><path d="M370.9,294.5 376.2,297.8 361.6,317.8 356.3,314.4Z" fill="#666b6c" stroke="#3a3f40" stroke-width="0.4" /><path d="M369.0,299.5 372.2,301.5 364.3,312.4 361.0,310.3Z" fill="#e6eef3" stroke="#2e3334" stroke-width="0.5" /><circle cx="331.0" cy="324.7" r="4.1" fill="#7f8b90" stroke="#3f8fb3" stroke-width="0.8"/><ellipse cx="331.0" cy="323.2" rx="2.3" ry="3.2" fill="#4f5455"/><ellipse cx="331.0" cy="321.1" rx="2.2" ry="1.5" fill="#8e9496" stroke="#444" stroke-width="0.4"/><circle cx="398.3" cy="366.5" r="4.1" fill="#7f8b90" stroke="#3f8fb3" stroke-width="0.8"/><ellipse cx="398.3" cy="365.0" rx="2.3" ry="3.2" fill="#4f5455"/><ellipse cx="398.3" cy="362.9" rx="2.2" ry="1.5" fill="#8e9496" stroke="#444" stroke-width="0.4"/><circle cx="344.8" cy="284.2" r="3.0" fill="none" stroke="#8f7cc0" stroke-width="0.8"/><circle cx="397.3" cy="317.1" r="2.9" fill="none" stroke="#8f7cc0" stroke-width="0.8"/><circle cx="396.5" cy="265.5" r="2.9" fill="none" stroke="#8f7cc0" stroke-width="0.8"/><circle cx="312.3" cy="283.3" r="1.5" fill="#6e5a9e" stroke="#9d8bc8" stroke-width="0.5"/><circle cx="334.8" cy="298.0" r="1.5" fill="#6e5a9e" stroke="#9d8bc8" stroke-width="0.5"/><circle cx="359.9" cy="293.5" r="1.5" fill="#6e5a9e" stroke="#9d8bc8" stroke-width="0.5"/><circle cx="271.5" cy="290.6" r="1.5" fill="#6e5a9e" stroke="#9d8bc8" stroke-width="0.5"/><circle cx="386.3" cy="257.2" r="1.5" fill="#6e5a9e" stroke="#9d8bc8" stroke-width="0.5"/><circle cx="405.6" cy="286.5" r="1.5" fill="#6e5a9e" stroke="#9d8bc8" stroke-width="0.5"/><circle cx="386.5" cy="331.0" r="1.5" fill="#6e5a9e" stroke="#9d8bc8" stroke-width="0.5"/><circle cx="405.8" cy="342.7" r="1.5" fill="#6e5a9e" stroke="#9d8bc8" stroke-width="0.5"/><circle cx="381.8" cy="307.8" r="1.5" fill="#6e5a9e" stroke="#9d8bc8" stroke-width="0.5"/></g><path d="M258.3,283.7 403.4,375.5 416.4,357.7 418.2,354.9 419.7,351.9 420.8,348.8 421.5,345.6 421.8,342.3 421.7,339.1 421.2,335.8 420.3,332.6 419.1,329.5 417.5,326.6 415.5,323.8 413.2,321.3 410.7,319.0 407.9,317.0 388.0,304.5 386.1,303.0 384.6,301.2 383.4,299.2 382.7,297.0 382.5,294.7 382.7,292.4 383.4,290.2 384.6,288.2 409.3,254.4 410.9,251.6 411.9,248.6 412.3,245.4 412.0,242.2 411.0,239.2 409.4,236.3 407.2,233.9 404.5,231.8 401.5,230.3 398.2,229.3 394.8,229.0 391.4,229.2 388.1,230.1 385.1,231.6 382.4,233.6 380.2,236.0 355.6,269.8 354.0,271.6 352.1,273.0 349.9,274.0 347.5,274.7 345.0,274.9 342.6,274.6 340.2,273.9 338.0,272.8 315.1,258.3 312.0,256.6 308.8,255.2 305.4,254.2 302.0,253.5 298.4,253.2 294.9,253.2 291.4,253.6 288.0,254.4 284.7,255.6 281.5,257.0 278.6,258.8 275.8,260.9 273.4,263.3 271.3,265.9Z" fill="none" stroke="#4a4d4b" stroke-width="0.45"/><path d="M260.7,283.2 402.9,373.3 415.0,356.8 416.7,354.2 418.0,351.3 419.1,348.4 419.7,345.4 420.0,342.3 420.0,339.2 419.5,336.1 418.7,333.1 417.5,330.2 416.0,327.4 414.1,324.8 412.0,322.4 409.5,320.2 406.9,318.3 387.1,305.8 384.9,304.1 383.1,302.1 381.8,299.8 381.0,297.2 380.7,294.6 381.0,292.1 381.8,289.6 383.2,287.3 407.8,253.5 409.3,251.0 410.2,248.2 410.5,245.4 410.2,242.5 409.4,239.8 407.9,237.2 406.0,235.0 403.6,233.1 400.9,231.8 397.9,230.9 394.8,230.6 391.7,230.8 388.8,231.6 386.0,232.9 383.6,234.7 381.7,236.9 357.0,270.7 355.2,272.7 353.0,274.3 350.5,275.5 347.8,276.3 345.0,276.5 342.2,276.2 339.5,275.4 337.1,274.2 314.1,259.6 311.2,258.0 308.2,256.7 305.0,255.7 301.7,255.1 298.4,254.8 295.0,254.8 291.7,255.2 288.5,256.0 285.4,257.0 282.4,258.4 279.6,260.1 277.0,262.1 274.7,264.3 272.7,266.8Z" fill="none" stroke="#4f5452" stroke-width="0.45"/><circle cx="295.6" cy="306" r="3.0" fill="none" stroke="#8f7cc0" stroke-width="0.8"/><circle cx="389.6" cy="365.9" r="3.0" fill="none" stroke="#8f7cc0" stroke-width="0.8"/><path d="M272.4,290.6 L258.6,307.8" stroke="#9d86d6" stroke-width="0.6"/><circle cx="329.6" cy="356.9" r="4.2" fill="none" stroke="#9a9a9a" stroke-width="1.1" opacity="0.8"/><circle cx="310.5" cy="339.3" r="1.6" fill="#303230"/><ellipse cx="740" cy="146" rx="16" ry="12" fill="#e6e6e6" opacity="0.6" filter="url(#blur3)"/><path d="M723.6,135.6 742.2,146.0 741.6,152.6 724.2,142.2Z" fill="#e3e3e3" stroke="#c9c9c9" stroke-width="0.4" /><path d="M742.2,146.0 753.5,131.6 752.6,138.0 741.6,152.6Z" fill="#dadada" stroke="#c9c9c9" stroke-width="0.4" /><path d="M735.7,121.2 753.5,131.6 742.2,146.0 723.6,135.6Z" fill="#efefef" stroke="#cdcdcd" stroke-width="0.4" /><path d="M733.0,126.5 748.0,134.8 740.0,144.6 727.5,137.2Z" fill="#e5e8ec" stroke="none" stroke-width="0" /><text x="0" y="0" font-family="Liberation Sans" font-size="6.2" fill="#8a8a8a" transform="translate(731.7,133.4) rotate(32) skewX(-8)">HAUT</text><path d="M732.8,140.8 L741,145.6 M733.5,143.5 L740.6,147.6 M745,143 L750.5,137" stroke="#d2d2d2" stroke-width="0.6"/><path d="M733.9,114.8 L735.7,117.3 L737.5,114.8 M735.7,117.3 L735.7,120.3" stroke="#6fd46f" stroke-width="0.9" fill="none"/><path d="M751.5,139.8 L757.2,143.5 M754.2,139.7 L757,143.7 M757,139.9 L754.2,143.6" stroke="#f49a9a" stroke-width="0.8" fill="none"/><path d="M725.3,143.6 L721.8,147.3 M720.2,144.5 L722.6,144.2 L720.3,148.8 L723,148.5" stroke="#8a8af5" stroke-width="0.8" fill="none"/></g>
<circle cx="42.6" cy="31.6" r="3.8" fill="#ee6a5f"/><circle cx="54.9" cy="31.6" r="3.8" fill="#f5be4f"/><circle cx="67.1" cy="31.6" r="3.8" fill="#62c655"/><rect x="39.30" y="45.90" width="2.5" height="2.4" rx="0.4" fill="#595959"/><rect x="39.30" y="48.90" width="2.5" height="2.4" rx="0.4" fill="#595959"/><rect x="39.30" y="51.90" width="2.5" height="2.4" rx="0.4" fill="#595959"/><rect x="42.50" y="45.90" width="2.5" height="2.4" rx="0.4" fill="#595959"/><rect x="42.50" y="48.90" width="2.5" height="2.4" rx="0.4" fill="#595959"/><rect x="42.50" y="51.90" width="2.5" height="2.4" rx="0.4" fill="#595959"/><rect x="45.70" y="45.90" width="2.5" height="2.4" rx="0.4" fill="#595959"/><rect x="45.70" y="48.90" width="2.5" height="2.4" rx="0.4" fill="#595959"/><rect x="45.70" y="51.90" width="2.5" height="2.4" rx="0.4" fill="#595959"/><path d="M60,45.6 L65.5,45.6 L68.2,48.3 L68.2,55 L60,55Z" fill="#5e5e5e"/><path d="M65.3,45.6 L65.3,48.5 L68.2,48.5" fill="none" stroke="#cdcdcd" stroke-width="0.6"/><path d="M72.30,49.10 L76.30,49.10 L74.30,51.70Z" fill="#5e5e5e"/><path d="M87.5,46 L94.6,46 L96.1,47.5 L96.1,55 L87.5,55Z" fill="#a3a3a3"/><rect x="89.2" y="46.3" width="5" height="3" fill="#cdcdcd"/><rect x="89.4" y="51.3" width="4.8" height="3.7" fill="#cdcdcd"/><rect x="90.4" y="52.2" width="2.6" height="2" fill="#a3a3a3"/><path d="M115.8,54.2 C115.8,50.5 113.5,49.3 109.5,49.3" fill="none" stroke="#a3a3a3" stroke-width="1.3"/><path d="M107.5,49.3 L110.6,46.4 L110.6,52.2Z" fill="#a3a3a3"/><path d="M119.70,49.25 L123.50,49.25 L121.60,51.72Z" fill="#a3a3a3"/><path d="M131.2,54.2 C131.2,50.5 133.5,49.3 137.5,49.3" fill="none" stroke="#a3a3a3" stroke-width="1.3"/><path d="M139.5,49.3 L136.4,46.4 L136.4,52.2Z" fill="#a3a3a3"/><path d="M143.30,49.25 L147.10,49.25 L145.20,51.72Z" fill="#a3a3a3"/><path d="M351,48 L354.5,46.5 L361,47.3 L361,54.3 L357.5,55.8 L351,55Z" fill="#7d7d7d"/><path d="M351,48 L357.5,48.8 L361,47.3 L354.5,46.5Z" fill="#9a9a9a"/><path d="M357.5,48.8 L361,47.3 L361,54.3 L357.5,55.8Z" fill="#5c5c5c"/><path d="M624.3,48.6 L629.3,53.6 M629.3,48.6 L624.3,53.6" stroke="#7a7a7a" stroke-width="0.9"/><path d="M644.9,47.2 L644.9,55.2 M640.9,51.2 L648.9,51.2" stroke="#7d7d7d" stroke-width="1.7"/><circle cx="665" cy="49.6" r="4.2" fill="none" stroke="#6e6e6e" stroke-width="1.3"/><path d="M662.5,48.5 C663.5,47 666,47 666.5,48.5 L667.8,47.8 L667.5,51.5 C666,53 663,52.5 662.5,50.5Z" fill="#6e6e6e"/><circle cx="685.3" cy="49.8" r="4.6" fill="none" stroke="#7a7a7a" stroke-width="0.9"/><circle cx="685.3" cy="49.8" r="3.3" fill="#6e6e6e"/><path d="M685.3,47.6 L685.3,50.2 L687.3,50.2" stroke="#cdcdcd" stroke-width="0.8" fill="none"/><path d="M701.6,53.3 C702.7,52.3 702.6,50.5 702.8,49.2 C703,47.3 704,46.2 705.2,46.1 C706.4,46.2 707.4,47.3 707.6,49.2 C707.8,50.5 707.7,52.3 708.8,53.3Z" fill="#6a6a6a"/><circle cx="705.2" cy="45.6" r="0.7" fill="#6a6a6a"/><circle cx="705.2" cy="54.3" r="0.9" fill="#6a6a6a"/><circle cx="725.4" cy="49.6" r="4.8" fill="#6e6e6e"/><text x="725.4" y="52.8" font-family="Liberation Sans" font-weight="bold" font-size="8" fill="#d0d0d0" text-anchor="middle">?</text><circle cx="750.6" cy="49.9" r="7.1" fill="#1c1a10" stroke="#caa51a" stroke-width="0.9"/><path d="M747.2,46.2 L754,46.2 L754,47.7 L751.6,47.7 L751.6,49.5 L753,49.5 L753,50.8 L751.6,50.8 L751.6,54.6 L749.6,54.6 L749.6,50.8 L748.2,50.8 L748.2,49.5 L749.6,49.5 L749.6,47.7 L747.2,47.7Z" fill="#e0b820"/><rect x="749.9" y="44.6" width="1.4" height="1.6" fill="#e0b820"/><rect x="118.5" y="72.1" width="39.5" height="1.7" fill="#1e93d9"/><path d="M97.70,83.62 L100.90,83.62 L99.30,85.70Z" fill="#555"/><rect x="118.6" y="76.9" width="16.4" height="16.6" fill="none" stroke="#8a8a8a" stroke-width="0.8"/><rect x="117.69999999999999" y="76.0" width="1.8" height="1.8" fill="#555"/><rect x="134.1" y="76.0" width="1.8" height="1.8" fill="#555"/><rect x="117.69999999999999" y="92.6" width="1.8" height="1.8" fill="#555"/><path d="M122.7,81 L131,81 C131,85.5 127,89.5 122.7,89.5Z" fill="none" stroke="#777" stroke-width="0.8"/><circle cx="122.7" cy="81" r="0.8" fill="#555"/><circle cx="131" cy="81" r="0.8" fill="#555"/><circle cx="122.7" cy="89.5" r="0.8" fill="#555"/><path d="M132.6,87.3 L132.6,95.8 M128.4,91.5 L136.8,91.5" stroke="#2fab3d" stroke-width="2.3"/><path d="M144.6,92.7 L155.6,92.7 L159,88.5 L159,91.3 L155.6,95.5 L144.6,95.5Z" fill="#c9c9c9"/><path d="M144.6,80.5 L155.6,80.5 L155.6,92.7 L144.6,92.7Z" fill="#62aae2"/><path d="M144.6,80.5 L148.6,76.3 L159,76.3 L155.6,80.5Z" fill="#8ac4ee"/><path d="M155.6,80.5 L159,76.3 L159,88.5 L155.6,92.7Z" fill="#3f8ccc"/><path d="M161.6,92 L161.6,78" stroke="#444" stroke-width="0.8"/><path d="M160.3,79 L161.6,76.6 L162.9,79Z" fill="#444"/><path d="M172,80.5 C176,76.3 184,76 188.8,80" fill="none" stroke="#555" stroke-width="0.8"/><path d="M170.2,81.8 L173.6,79.6 L172.6,82.6Z" fill="#555"/><path d="M169.8,85 L173.6,88 C175.5,85.8 180.5,85.2 186.6,87.2 L186.6,93 C180.5,90.8 176,91.5 174,94 L170,91.3 Z" fill="#62aae2"/><path d="M169.8,85 C172.5,81.8 180.5,80.8 189.6,83.6 L186.6,87.2 C180.5,85.2 175.5,85.8 173.6,88 Z" fill="#8ac4ee"/><path d="M186.6,87.2 L189.6,83.8 L189.6,90 L186.6,93Z" fill="#fff" stroke="#555" stroke-width="0.6"/><path d="M196.2,80.3 L200.5,75.8 L215.5,75.8 L215.5,91 L211.5,95.6 L196.2,95.6Z" fill="#dcdcdc" stroke="#6d6d6d" stroke-width="0.7"/><path d="M196.2,80.3 L211.5,80.3 L215.5,75.8 M211.5,80.3 L211.5,95.6" fill="none" stroke="#6d6d6d" stroke-width="0.6"/><path d="M211.5,80.3 L215.5,75.8 L215.5,91 L211.5,95.6Z" fill="#c4c4c4"/><circle cx="203.8" cy="88" r="5" fill="#f4f4f4" stroke="#777" stroke-width="0.6"/><path d="M199.2,88 A4.6,4.6 0 0 0 208.2,89.5 C205,90 202.5,87.5 203.5,83.4 A4.6,4.6 0 0 0 199.2,88Z" fill="#62aae2"/><path d="M224.3,79.3 L237.5,79.3 M224.3,79.3 L224.3,92 L237.5,92" fill="none" stroke="#8a8a8a" stroke-width="0.8"/><rect x="222.6" y="77.5" width="3.5" height="3.5" fill="#fff" stroke="#777" stroke-width="0.6"/><rect x="235.8" y="77.5" width="3.7" height="3.7" fill="#62aae2"/><rect x="222.6" y="90.2" width="3.7" height="3.7" fill="#62aae2"/><rect x="235.8" y="90.2" width="3.7" height="3.7" fill="#62aae2"/><rect x="248.8" y="78" width="17.5" height="17.5" rx="4" fill="#9c7fd6"/><rect x="250" y="79" width="13" height="6" rx="2" fill="#b79ae6"/><path d="M257.3,80.5 L257.3,95 M249.5,87.5 L265.5,87.5" stroke="#8565c4" stroke-width="0.6"/><path d="M263.2,76.3 L264.2,79.6 L267.5,78.5 L265.2,81 L267.8,83.2 L264.5,83 L264.2,86 L262.6,83.4 L259.8,85 L260.9,82 L258.3,80.5 L261.6,80 Z" fill="#f5a21e"/><rect x="274.5" y="76" width="0.8" height="31" fill="#dedede"/><rect x="438.8" y="76" width="0.8" height="31" fill="#dedede"/><rect x="501.3" y="76" width="0.8" height="31" fill="#dedede"/><rect x="564.5" y="76" width="0.8" height="31" fill="#dedede"/><rect x="622" y="76" width="0.8" height="31" fill="#dedede"/><rect x="670.4" y="76" width="0.8" height="31" fill="#dedede"/><path d="M282.3,78.5 L284.5,76.3 L289,76.3 L289,94.8 L282.3,94.8Z" fill="#e4e4e4" stroke="#777" stroke-width="0.6"/><path d="M287,78.5 L289.5,76.3 L295.3,76.3 L295.3,92.5 L292,95.5 L287,95.5Z" fill="#62aae2"/><path d="M292,78.5 L295.3,76.3 L295.3,92.5 L292,95.5Z" fill="#3f8ccc"/><path d="M295,85.3 L299,85.3" stroke="#333" stroke-width="0.7"/><path d="M298.3,84.2 L300.5,85.3 L298.3,86.4Z" fill="#333"/><path d="M308,80.5 L312.3,76.3 L318,76.3 C323,76.3 327,80 327.4,85 L327.4,91.5 L323,95.5 L308,95.5Z" fill="#dedede" stroke="#777" stroke-width="0.6"/><path d="M318,76.3 C323,76.3 327,80 327.4,85 L323.2,87.5 C323.2,83 320.5,80 316,80Z" fill="#62aae2"/><path d="M323.2,87.5 L327.4,85 L327.4,91.5 L323,95.5Z" fill="#c6c6c6"/><path d="M334,80.3 L338.2,76.3 L353.8,76.3 L353.8,91.5 L349.6,95.5 L334,95.5Z" fill="#dcdcdc" stroke="#777" stroke-width="0.6"/><path d="M349.6,80.3 L353.8,76.3 L353.8,91.5 L349.6,95.5Z" fill="#c6c6c6"/><path d="M334,80.3 L349.6,80.3 L349.6,95.5" fill="none" stroke="#777" stroke-width="0.6"/><rect x="336.5" y="83" width="10.5" height="10" fill="#fff"/><path d="M336.5,83 L339.5,83 L339.5,90 L347,90 L347,93 L336.5,93Z" fill="#3f8ccc"/><path d="M339.5,90 L347,90 L347,93 L336.5,93Z" fill="#8ac4ee"/><path d="M366.5,77.5 L368.5,76 L380,76 L380,87.5 L377.5,90 L366.5,90Z" fill="#62aae2"/><path d="M377.5,78 L380,76 L380,87.5 L377.5,90Z" fill="#3f8ccc"/><path d="M360.3,83.5 L362.5,81.5 L373.5,81.5 L373.5,93.5 L371,95.5 L360.3,95.5Z" fill="#62aae2"/><path d="M360.3,83.5 L362.5,81.5 L366.5,81.5 L366.5,83.5Z" fill="#8ac4ee"/><path d="M387.5,79.5 L389.5,76.3 L405,76.3 L405,83 L402.5,86 L387.5,86Z" fill="#62aae2"/><path d="M387.5,79.5 L389.5,76.3 L405,76.3 L402.5,79.5Z" fill="#8ac4ee"/><path d="M402.5,79.5 L405,76.3 L405,83 L402.5,86Z" fill="#3f8ccc"/><path d="M386.3,87.2 L403,87.2 L406,84.3" fill="none" stroke="#62aae2" stroke-width="0.9"/><path d="M388,89 L403,89 L405,87 L405,92.5 L402.5,94.8 L388,94.8Z" fill="#dedede" stroke="#777" stroke-width="0.6"/><path d="M422.6,77 L422.6,94.5 M414,85.8 L431.5,85.8" stroke="#333" stroke-width="1.1"/><path d="M422.6,76.5 L420,80 L425.2,80Z M422.6,95 L420,91.5 L425.2,91.5Z M413.5,85.8 L417,83.2 L417,88.4Z M432,85.8 L428.5,83.2 L428.5,88.4Z" fill="#333"/><path d="M447,81 L449,79 L456,79 L456,86 L447,86Z" fill="#62aae2"/><path d="M447,86 L456,86 L456,95 L447,95Z" fill="#dadada" stroke="#888" stroke-width="0.5"/><path d="M456,86 L458,84.5 L465.5,84.5 L465.5,93 L463.5,95 L456,95Z" fill="#dadada" stroke="#888" stroke-width="0.5"/><path d="M461.5,76.5 L462.2,79 L464.8,78.2 L463.2,80.2 L465.5,81.8 L462.8,81.9 L462.7,84.5 L461.4,82.3 L459.3,83.8 L459.9,81.2 L457.5,80.2 L460.2,79.5Z" fill="#f5a21e"/><path d="M475,81 L478,78 L480,78 L480,83 L477.5,85 L477.5,92 L475,94Z" fill="#dadada" stroke="#777" stroke-width="0.6"/><path d="M484,82 L486.5,80 L491,84 L491,94 L488,92 L484,92Z" fill="#dadada" stroke="#777" stroke-width="0.6"/><path d="M480,83 L481.5,83 L479,88Z M484.5,83 L486,84 L483.5,87Z" fill="#62aae2"/><path d="M524,80.5 L528,76.2 L531,76.2 L531,91 L527,95 L524,95Z" fill="#e2e2e2" stroke="#777" stroke-width="0.6"/><path d="M527.5,80.5 L531.5,76.2 L531.5,90.5 L527.5,94.8Z" fill="#4fbf6a"/><path d="M534.5,80.5 L538.5,76.2 L538.5,90.5 L534.5,94.8Z" fill="#e8956a"/><path d="M585.3,83.4 L602.2,83.4" stroke="#444" stroke-width="0.6"/><path d="M585.3,81.8 L585.3,86.5 M602.2,81.8 L602.2,86.5" stroke="#444" stroke-width="0.6"/><path d="M586.8,82.4 L586.8,84.4 L585.5,83.4Z M600.7,82.4 L600.7,84.4 L602,83.4Z" fill="#444"/><rect x="585.3" y="87" width="17" height="3.4" fill="#f5a623"/><path d="M587,88.7 L601,88.7" stroke="#c77a00" stroke-width="0.5" stroke-dasharray="0.7,0.7"/><rect x="637" y="76.8" width="18" height="17.9" fill="#86c6f0" stroke="#5a9fd4" stroke-width="0.5"/><path d="M637,94.7 L637,88 C639,84.5 641,83.5 643.5,87.5 C645.5,89 647,88 649,86.5 C651,85.5 653,87 655,89 L655,94.7Z" fill="#4b97d4"/><circle cx="650.8" cy="81.2" r="1.8" fill="#f0f0c0"/><rect x="693.8" y="74.1" width="23.2" height="23.3" fill="#1b91d8"/><rect x="695.6" y="75.9" width="16" height="13" fill="none" stroke="#9fd86a" stroke-width="0.6" stroke-dasharray="1.2,0.9"/><path d="M709.3,85.5 L709.3,94.6 L711.4,92.6 L713,96 L714.3,95.4 L712.8,92 L715.6,92Z" fill="#fff"/><path d="M201.60,102.47 L204.60,102.47 L203.10,104.42Z" fill="#505050"/><path d="M370.10,102.47 L373.10,102.47 L371.60,104.42Z" fill="#505050"/><path d="M486.50,102.47 L489.50,102.47 L488.00,104.42Z" fill="#505050"/><path d="M553.60,102.47 L556.60,102.47 L555.10,104.42Z" fill="#505050"/><path d="M609.90,102.47 L612.90,102.47 L611.40,104.42Z" fill="#505050"/><path d="M659.00,102.47 L662.00,102.47 L660.50,104.42Z" fill="#505050"/><path d="M729.10,102.47 L732.10,102.47 L730.60,104.42Z" fill="#505050"/><rect x="40.7" y="427" width="1.1" height="8" fill="#4a4a4a"/><path d="M42.4,431 L48.2,427 L48.2,435Z" fill="#4a4a4a"/><path d="M55.9,431 L61.4,427 L61.4,435Z" fill="#4a4a4a"/><rect x="62.3" y="429" width="1.2" height="4" fill="#4a4a4a"/><path d="M71.1,426.4 L78.5,431.1 L71.1,435.8Z" fill="#4a4a4a"/><rect x="86" y="429" width="1.2" height="4" fill="#4a4a4a"/><path d="M88,427 L93.6,431 L88,435Z" fill="#4a4a4a"/><path d="M102,427 L107.3,431 L102,435Z" fill="#4a4a4a"/><rect x="108.1" y="427" width="1.1" height="8" fill="#4a4a4a"/><rect x="128.1" y="438.5" width="606" height="0.8" fill="#c9c9c9"/><path d="M736,438.9 L737,438.9 M738.5,438.9 L739.5,438.9 M741,438.9 L742,438.9" stroke="#c9c9c9" stroke-width="0.8"/><rect x="123.30" y="424.30" width="8.2" height="8.2" fill="none" stroke="#8c8c8c" stroke-width="0.6"/><path d="M125.50,426.30 L129.00,426.30 C129.00,428.30 127.50,429.80 125.50,429.80Z" fill="none" stroke="#9a9a9a" stroke-width="0.5"/><rect x="122.65" y="423.65" width="1.3" height="1.3" fill="#3c93dc"/><rect x="130.85" y="423.65" width="1.3" height="1.3" fill="#3c93dc"/><rect x="122.65" y="431.85" width="1.3" height="1.3" fill="#3c93dc"/><rect x="124.85" y="425.65" width="1.3" height="1.3" fill="#3c93dc"/><rect x="128.35" y="425.65" width="1.3" height="1.3" fill="#3c93dc"/><rect x="124.85" y="429.15" width="1.3" height="1.3" fill="#3c93dc"/><path d="M129.20,433.20 L132.20,429.60" stroke="#f2a51d" stroke-width="1.6"/><path d="M131.60,430.30 L132.60,429.10" stroke="#e8403a" stroke-width="1.6"/><rect x="128.20" y="435.5" width="0.7" height="3.2" fill="#c9c9c9"/><path d="M139.15,433.30 L145.55,433.30 L146.65,432.10 L146.65,433.80 L139.15,433.80Z" fill="#cfcfcf"/><path d="M139.15,425.80 L140.25,424.40 L146.65,424.40 L146.65,432.10 L145.55,433.30 L139.15,433.30Z" fill="#5ea9e3"/><path d="M139.15,425.80 L140.25,424.40 L146.65,424.40 L145.55,425.80Z" fill="#8cc5ef"/><path d="M145.55,425.80 L146.65,424.40 L146.65,432.10 L145.55,433.30Z" fill="#3f8bd0"/><path d="M147.95,424.80 L147.95,431.30" stroke="#444" stroke-width="0.5"/><rect x="142.85" y="435.5" width="0.7" height="3.2" fill="#c9c9c9"/><path d="M152.50,426.40 L154.60,424.10 L157.30,424.10 C160.30,424.10 162.30,426.30 162.50,428.80 L162.50,431.30 L160.50,433.40 L152.50,433.40Z" fill="#dcdcdc" stroke="#9a9a9a" stroke-width="0.4"/><path d="M157.30,424.10 C160.30,424.10 162.30,426.30 162.50,428.80 L160.50,430.00 C160.30,427.80 158.80,426.20 156.50,426.10Z" fill="#4aa0e0"/><path d="M160.50,430.00 L162.50,428.80 L162.50,431.30 L160.50,433.40Z" fill="#c2c2c2"/><rect x="157.50" y="435.5" width="0.7" height="3.2" fill="#c9c9c9"/><path d="M167.15,426.40 L169.25,424.10 L171.95,424.10 C174.95,424.10 176.95,426.30 177.15,428.80 L177.15,431.30 L175.15,433.40 L167.15,433.40Z" fill="#dcdcdc" stroke="#9a9a9a" stroke-width="0.4"/><path d="M171.95,424.10 C174.95,424.10 176.95,426.30 177.15,428.80 L175.15,430.00 C174.95,427.80 173.45,426.20 171.15,426.10Z" fill="#4aa0e0"/><path d="M175.15,430.00 L177.15,428.80 L177.15,431.30 L175.15,433.40Z" fill="#c2c2c2"/><rect x="172.15" y="435.5" width="0.7" height="3.2" fill="#c9c9c9"/><path d="M181.80,426.40 L183.90,424.10 L186.60,424.10 C189.60,424.10 191.60,426.30 191.80,428.80 L191.80,431.30 L189.80,433.40 L181.80,433.40Z" fill="#dcdcdc" stroke="#9a9a9a" stroke-width="0.4"/><path d="M186.60,424.10 C189.60,424.10 191.60,426.30 191.80,428.80 L189.80,430.00 C189.60,427.80 188.10,426.20 185.80,426.10Z" fill="#4aa0e0"/><path d="M189.80,430.00 L191.80,428.80 L191.80,431.30 L189.80,433.40Z" fill="#c2c2c2"/><rect x="186.80" y="435.5" width="0.7" height="3.2" fill="#c9c9c9"/><path d="M196.45,426.40 L198.55,424.10 L201.25,424.10 C204.25,424.10 206.25,426.30 206.45,428.80 L206.45,431.30 L204.45,433.40 L196.45,433.40Z" fill="#dcdcdc" stroke="#9a9a9a" stroke-width="0.4"/><path d="M201.25,424.10 C204.25,424.10 206.25,426.30 206.45,428.80 L204.45,430.00 C204.25,427.80 202.75,426.20 200.45,426.10Z" fill="#4aa0e0"/><path d="M204.45,430.00 L206.45,428.80 L206.45,431.30 L204.45,433.40Z" fill="#c2c2c2"/><rect x="201.45" y="435.5" width="0.7" height="3.2" fill="#c9c9c9"/><path d="M211.40,426.20 L213.40,424.20 L220.90,424.20 L220.90,431.60 L218.90,433.60 L211.40,433.60Z" fill="#dcdcdc" stroke="#888" stroke-width="0.4"/><rect x="212.70" y="427.40" width="5" height="5" fill="#fff"/><path d="M212.70,427.40 L214.10,427.40 L214.10,431.00 L217.70,431.00 L217.70,432.40 L212.70,432.40Z" fill="#3f8bd0"/><rect x="216.10" y="435.5" width="0.7" height="3.2" fill="#c9c9c9"/><rect x="225.85" y="424.30" width="8.2" height="8.2" fill="none" stroke="#8c8c8c" stroke-width="0.6"/><path d="M228.05,426.30 L231.55,426.30 C231.55,428.30 230.05,429.80 228.05,429.80Z" fill="none" stroke="#9a9a9a" stroke-width="0.5"/><rect x="225.20" y="423.65" width="1.3" height="1.3" fill="#3c93dc"/><rect x="233.40" y="423.65" width="1.3" height="1.3" fill="#3c93dc"/><rect x="225.20" y="431.85" width="1.3" height="1.3" fill="#3c93dc"/><rect x="227.40" y="425.65" width="1.3" height="1.3" fill="#3c93dc"/><rect x="230.90" y="425.65" width="1.3" height="1.3" fill="#3c93dc"/><rect x="227.40" y="429.15" width="1.3" height="1.3" fill="#3c93dc"/><path d="M231.75,433.20 L234.75,429.60" stroke="#f2a51d" stroke-width="1.6"/><path d="M234.15,430.30 L235.15,429.10" stroke="#e8403a" stroke-width="1.6"/><rect x="230.75" y="435.5" width="0.7" height="3.2" fill="#c9c9c9"/><path d="M241.70,433.30 L248.10,433.30 L249.20,432.10 L249.20,433.80 L241.70,433.80Z" fill="#cfcfcf"/><path d="M241.70,425.80 L242.80,424.40 L249.20,424.40 L249.20,432.10 L248.10,433.30 L241.70,433.30Z" fill="#5ea9e3"/><path d="M241.70,425.80 L242.80,424.40 L249.20,424.40 L248.10,425.80Z" fill="#8cc5ef"/><path d="M248.10,425.80 L249.20,424.40 L249.20,432.10 L248.10,433.30Z" fill="#3f8bd0"/><path d="M250.50,424.80 L250.50,431.30" stroke="#444" stroke-width="0.5"/><rect x="245.40" y="435.5" width="0.7" height="3.2" fill="#c9c9c9"/><rect x="255.15" y="424.30" width="8.2" height="8.2" fill="none" stroke="#8c8c8c" stroke-width="0.6"/><path d="M257.35,426.30 L260.85,426.30 C260.85,428.30 259.35,429.80 257.35,429.80Z" fill="none" stroke="#9a9a9a" stroke-width="0.5"/><rect x="254.50" y="423.65" width="1.3" height="1.3" fill="#3c93dc"/><rect x="262.70" y="423.65" width="1.3" height="1.3" fill="#3c93dc"/><rect x="254.50" y="431.85" width="1.3" height="1.3" fill="#3c93dc"/><rect x="256.70" y="425.65" width="1.3" height="1.3" fill="#3c93dc"/><rect x="260.20" y="425.65" width="1.3" height="1.3" fill="#3c93dc"/><rect x="256.70" y="429.15" width="1.3" height="1.3" fill="#3c93dc"/><path d="M261.05,433.20 L264.05,429.60" stroke="#f2a51d" stroke-width="1.6"/><path d="M263.45,430.30 L264.45,429.10" stroke="#e8403a" stroke-width="1.6"/><rect x="260.05" y="435.5" width="0.7" height="3.2" fill="#c9c9c9"/><path d="M271.00,433.30 L277.40,433.30 L278.50,432.10 L278.50,433.80 L271.00,433.80Z" fill="#cfcfcf"/><path d="M271.00,425.80 L272.10,424.40 L278.50,424.40 L278.50,432.10 L277.40,433.30 L271.00,433.30Z" fill="#5ea9e3"/><path d="M271.00,425.80 L272.10,424.40 L278.50,424.40 L277.40,425.80Z" fill="#8cc5ef"/><path d="M277.40,425.80 L278.50,424.40 L278.50,432.10 L277.40,433.30Z" fill="#3f8bd0"/><path d="M279.80,424.80 L279.80,431.30" stroke="#444" stroke-width="0.5"/><rect x="274.70" y="435.5" width="0.7" height="3.2" fill="#c9c9c9"/><path d="M284.35,426.40 L286.45,424.10 L289.15,424.10 C292.15,424.10 294.15,426.30 294.35,428.80 L294.35,431.30 L292.35,433.40 L284.35,433.40Z" fill="#dcdcdc" stroke="#9a9a9a" stroke-width="0.4"/><path d="M289.15,424.10 C292.15,424.10 294.15,426.30 294.35,428.80 L292.35,430.00 C292.15,427.80 290.65,426.20 288.35,426.10Z" fill="#4aa0e0"/><path d="M292.35,430.00 L294.35,428.80 L294.35,431.30 L292.35,433.40Z" fill="#c2c2c2"/><rect x="289.35" y="435.5" width="0.7" height="3.2" fill="#c9c9c9"/><rect x="299.10" y="424.30" width="8.2" height="8.2" fill="none" stroke="#8c8c8c" stroke-width="0.6"/><path d="M301.30,426.30 L304.80,426.30 C304.80,428.30 303.30,429.80 301.30,429.80Z" fill="none" stroke="#9a9a9a" stroke-width="0.5"/><rect x="298.45" y="423.65" width="1.3" height="1.3" fill="#3c93dc"/><rect x="306.65" y="423.65" width="1.3" height="1.3" fill="#3c93dc"/><rect x="298.45" y="431.85" width="1.3" height="1.3" fill="#3c93dc"/><rect x="300.65" y="425.65" width="1.3" height="1.3" fill="#3c93dc"/><rect x="304.15" y="425.65" width="1.3" height="1.3" fill="#3c93dc"/><rect x="300.65" y="429.15" width="1.3" height="1.3" fill="#3c93dc"/><path d="M305.00,433.20 L308.00,429.60" stroke="#f2a51d" stroke-width="1.6"/><path d="M307.40,430.30 L308.40,429.10" stroke="#e8403a" stroke-width="1.6"/><rect x="304.00" y="435.5" width="0.7" height="3.2" fill="#c9c9c9"/><path d="M314.95,433.30 L321.35,433.30 L322.45,432.10 L322.45,433.80 L314.95,433.80Z" fill="#cfcfcf"/><path d="M314.95,425.80 L316.05,424.40 L322.45,424.40 L322.45,432.10 L321.35,433.30 L314.95,433.30Z" fill="#5ea9e3"/><path d="M314.95,425.80 L316.05,424.40 L322.45,424.40 L321.35,425.80Z" fill="#8cc5ef"/><path d="M321.35,425.80 L322.45,424.40 L322.45,432.10 L321.35,433.30Z" fill="#3f8bd0"/><path d="M323.75,424.80 L323.75,431.30" stroke="#444" stroke-width="0.5"/><rect x="318.65" y="435.5" width="0.7" height="3.2" fill="#c9c9c9"/><rect x="328.40" y="424.30" width="8.2" height="8.2" fill="none" stroke="#8c8c8c" stroke-width="0.6"/><path d="M330.60,426.30 L334.10,426.30 C334.10,428.30 332.60,429.80 330.60,429.80Z" fill="none" stroke="#9a9a9a" stroke-width="0.5"/><rect x="327.75" y="423.65" width="1.3" height="1.3" fill="#3c93dc"/><rect x="335.95" y="423.65" width="1.3" height="1.3" fill="#3c93dc"/><rect x="327.75" y="431.85" width="1.3" height="1.3" fill="#3c93dc"/><rect x="329.95" y="425.65" width="1.3" height="1.3" fill="#3c93dc"/><rect x="333.45" y="425.65" width="1.3" height="1.3" fill="#3c93dc"/><rect x="329.95" y="429.15" width="1.3" height="1.3" fill="#3c93dc"/><path d="M334.30,433.20 L337.30,429.60" stroke="#f2a51d" stroke-width="1.6"/><path d="M336.70,430.30 L337.70,429.10" stroke="#e8403a" stroke-width="1.6"/><rect x="333.30" y="435.5" width="0.7" height="3.2" fill="#c9c9c9"/><path d="M344.25,433.30 L350.65,433.30 L351.75,432.10 L351.75,433.80 L344.25,433.80Z" fill="#cfcfcf"/><path d="M344.25,425.80 L345.35,424.40 L351.75,424.40 L351.75,432.10 L350.65,433.30 L344.25,433.30Z" fill="#5ea9e3"/><path d="M344.25,425.80 L345.35,424.40 L351.75,424.40 L350.65,425.80Z" fill="#8cc5ef"/><path d="M350.65,425.80 L351.75,424.40 L351.75,432.10 L350.65,433.30Z" fill="#3f8bd0"/><path d="M353.05,424.80 L353.05,431.30" stroke="#444" stroke-width="0.5"/><rect x="347.95" y="435.5" width="0.7" height="3.2" fill="#c9c9c9"/><rect x="357.70" y="424.30" width="8.2" height="8.2" fill="none" stroke="#8c8c8c" stroke-width="0.6"/><path d="M359.90,426.30 L363.40,426.30 C363.40,428.30 361.90,429.80 359.90,429.80Z" fill="none" stroke="#9a9a9a" stroke-width="0.5"/><rect x="357.05" y="423.65" width="1.3" height="1.3" fill="#3c93dc"/><rect x="365.25" y="423.65" width="1.3" height="1.3" fill="#3c93dc"/><rect x="357.05" y="431.85" width="1.3" height="1.3" fill="#3c93dc"/><rect x="359.25" y="425.65" width="1.3" height="1.3" fill="#3c93dc"/><rect x="362.75" y="425.65" width="1.3" height="1.3" fill="#3c93dc"/><rect x="359.25" y="429.15" width="1.3" height="1.3" fill="#3c93dc"/><path d="M363.60,433.20 L366.60,429.60" stroke="#f2a51d" stroke-width="1.6"/><path d="M366.00,430.30 L367.00,429.10" stroke="#e8403a" stroke-width="1.6"/><rect x="362.60" y="435.5" width="0.7" height="3.2" fill="#c9c9c9"/><path d="M373.55,433.30 L379.95,433.30 L381.05,432.10 L381.05,433.80 L373.55,433.80Z" fill="#cfcfcf"/><path d="M373.55,425.80 L374.65,424.40 L381.05,424.40 L381.05,432.10 L379.95,433.30 L373.55,433.30Z" fill="#5ea9e3"/><path d="M373.55,425.80 L374.65,424.40 L381.05,424.40 L379.95,425.80Z" fill="#8cc5ef"/><path d="M379.95,425.80 L381.05,424.40 L381.05,432.10 L379.95,433.30Z" fill="#3f8bd0"/><path d="M382.35,424.80 L382.35,431.30" stroke="#444" stroke-width="0.5"/><rect x="377.25" y="435.5" width="0.7" height="3.2" fill="#c9c9c9"/><rect x="387.00" y="424.30" width="8.2" height="8.2" fill="none" stroke="#8c8c8c" stroke-width="0.6"/><path d="M389.20,426.30 L392.70,426.30 C392.70,428.30 391.20,429.80 389.20,429.80Z" fill="none" stroke="#9a9a9a" stroke-width="0.5"/><rect x="386.35" y="423.65" width="1.3" height="1.3" fill="#3c93dc"/><rect x="394.55" y="423.65" width="1.3" height="1.3" fill="#3c93dc"/><rect x="386.35" y="431.85" width="1.3" height="1.3" fill="#3c93dc"/><rect x="388.55" y="425.65" width="1.3" height="1.3" fill="#3c93dc"/><rect x="392.05" y="425.65" width="1.3" height="1.3" fill="#3c93dc"/><rect x="388.55" y="429.15" width="1.3" height="1.3" fill="#3c93dc"/><path d="M392.90,433.20 L395.90,429.60" stroke="#f2a51d" stroke-width="1.6"/><path d="M395.30,430.30 L396.30,429.10" stroke="#e8403a" stroke-width="1.6"/><rect x="391.90" y="435.5" width="0.7" height="3.2" fill="#c9c9c9"/><path d="M402.85,433.30 L409.25,433.30 L410.35,432.10 L410.35,433.80 L402.85,433.80Z" fill="#cfcfcf"/><path d="M402.85,425.80 L403.95,424.40 L410.35,424.40 L410.35,432.10 L409.25,433.30 L402.85,433.30Z" fill="#5ea9e3"/><path d="M402.85,425.80 L403.95,424.40 L410.35,424.40 L409.25,425.80Z" fill="#8cc5ef"/><path d="M409.25,425.80 L410.35,424.40 L410.35,432.10 L409.25,433.30Z" fill="#3f8bd0"/><path d="M411.65,424.80 L411.65,431.30" stroke="#444" stroke-width="0.5"/><rect x="406.55" y="435.5" width="0.7" height="3.2" fill="#c9c9c9"/><rect x="416.30" y="424.30" width="8.2" height="8.2" fill="none" stroke="#8c8c8c" stroke-width="0.6"/><path d="M418.50,426.30 L422.00,426.30 C422.00,428.30 420.50,429.80 418.50,429.80Z" fill="none" stroke="#9a9a9a" stroke-width="0.5"/><rect x="415.65" y="423.65" width="1.3" height="1.3" fill="#3c93dc"/><rect x="423.85" y="423.65" width="1.3" height="1.3" fill="#3c93dc"/><rect x="415.65" y="431.85" width="1.3" height="1.3" fill="#3c93dc"/><rect x="417.85" y="425.65" width="1.3" height="1.3" fill="#3c93dc"/><rect x="421.35" y="425.65" width="1.3" height="1.3" fill="#3c93dc"/><rect x="417.85" y="429.15" width="1.3" height="1.3" fill="#3c93dc"/><path d="M422.20,433.20 L425.20,429.60" stroke="#f2a51d" stroke-width="1.6"/><path d="M424.60,430.30 L425.60,429.10" stroke="#e8403a" stroke-width="1.6"/><rect x="421.20" y="435.5" width="0.7" height="3.2" fill="#c9c9c9"/><path d="M432.15,433.30 L438.55,433.30 L439.65,432.10 L439.65,433.80 L432.15,433.80Z" fill="#cfcfcf"/><path d="M432.15,425.80 L433.25,424.40 L439.65,424.40 L439.65,432.10 L438.55,433.30 L432.15,433.30Z" fill="#5ea9e3"/><path d="M432.15,425.80 L433.25,424.40 L439.65,424.40 L438.55,425.80Z" fill="#8cc5ef"/><path d="M438.55,425.80 L439.65,424.40 L439.65,432.10 L438.55,433.30Z" fill="#3f8bd0"/><path d="M440.95,424.80 L440.95,431.30" stroke="#444" stroke-width="0.5"/><rect x="435.85" y="435.5" width="0.7" height="3.2" fill="#c9c9c9"/><rect x="445.60" y="424.30" width="8.2" height="8.2" fill="none" stroke="#8c8c8c" stroke-width="0.6"/><path d="M447.80,426.30 L451.30,426.30 C451.30,428.30 449.80,429.80 447.80,429.80Z" fill="none" stroke="#9a9a9a" stroke-width="0.5"/><rect x="444.95" y="423.65" width="1.3" height="1.3" fill="#3c93dc"/><rect x="453.15" y="423.65" width="1.3" height="1.3" fill="#3c93dc"/><rect x="444.95" y="431.85" width="1.3" height="1.3" fill="#3c93dc"/><rect x="447.15" y="425.65" width="1.3" height="1.3" fill="#3c93dc"/><rect x="450.65" y="425.65" width="1.3" height="1.3" fill="#3c93dc"/><rect x="447.15" y="429.15" width="1.3" height="1.3" fill="#3c93dc"/><path d="M451.50,433.20 L454.50,429.60" stroke="#f2a51d" stroke-width="1.6"/><path d="M453.90,430.30 L454.90,429.10" stroke="#e8403a" stroke-width="1.6"/><rect x="450.50" y="435.5" width="0.7" height="3.2" fill="#c9c9c9"/><path d="M461.45,433.30 L467.85,433.30 L468.95,432.10 L468.95,433.80 L461.45,433.80Z" fill="#cfcfcf"/><path d="M461.45,425.80 L462.55,424.40 L468.95,424.40 L468.95,432.10 L467.85,433.30 L461.45,433.30Z" fill="#5ea9e3"/><path d="M461.45,425.80 L462.55,424.40 L468.95,424.40 L467.85,425.80Z" fill="#8cc5ef"/><path d="M467.85,425.80 L468.95,424.40 L468.95,432.10 L467.85,433.30Z" fill="#3f8bd0"/><path d="M470.25,424.80 L470.25,431.30" stroke="#444" stroke-width="0.5"/><rect x="465.15" y="435.5" width="0.7" height="3.2" fill="#c9c9c9"/><rect x="474.90" y="424.30" width="8.2" height="8.2" fill="none" stroke="#8c8c8c" stroke-width="0.6"/><path d="M477.10,426.30 L480.60,426.30 C480.60,428.30 479.10,429.80 477.10,429.80Z" fill="none" stroke="#9a9a9a" stroke-width="0.5"/><rect x="474.25" y="423.65" width="1.3" height="1.3" fill="#3c93dc"/><rect x="482.45" y="423.65" width="1.3" height="1.3" fill="#3c93dc"/><rect x="474.25" y="431.85" width="1.3" height="1.3" fill="#3c93dc"/><rect x="476.45" y="425.65" width="1.3" height="1.3" fill="#3c93dc"/><rect x="479.95" y="425.65" width="1.3" height="1.3" fill="#3c93dc"/><rect x="476.45" y="429.15" width="1.3" height="1.3" fill="#3c93dc"/><path d="M480.80,433.20 L483.80,429.60" stroke="#f2a51d" stroke-width="1.6"/><path d="M483.20,430.30 L484.20,429.10" stroke="#e8403a" stroke-width="1.6"/><rect x="479.80" y="435.5" width="0.7" height="3.2" fill="#c9c9c9"/><path d="M489.45,426.40 L491.55,424.10 L494.25,424.10 C497.25,424.10 499.25,426.30 499.45,428.80 L499.45,431.30 L497.45,433.40 L489.45,433.40Z" fill="#dcdcdc" stroke="#9a9a9a" stroke-width="0.4"/><path d="M494.25,424.10 C497.25,424.10 499.25,426.30 499.45,428.80 L497.45,430.00 C497.25,427.80 495.75,426.20 493.45,426.10Z" fill="#4aa0e0"/><path d="M497.45,430.00 L499.45,428.80 L499.45,431.30 L497.45,433.40Z" fill="#c2c2c2"/><rect x="494.45" y="435.5" width="0.7" height="3.2" fill="#c9c9c9"/><rect x="504.20" y="424.30" width="8.2" height="8.2" fill="none" stroke="#8c8c8c" stroke-width="0.6"/><path d="M506.40,426.30 L509.90,426.30 C509.90,428.30 508.40,429.80 506.40,429.80Z" fill="none" stroke="#9a9a9a" stroke-width="0.5"/><rect x="503.55" y="423.65" width="1.3" height="1.3" fill="#3c93dc"/><rect x="511.75" y="423.65" width="1.3" height="1.3" fill="#3c93dc"/><rect x="503.55" y="431.85" width="1.3" height="1.3" fill="#3c93dc"/><rect x="505.75" y="425.65" width="1.3" height="1.3" fill="#3c93dc"/><rect x="509.25" y="425.65" width="1.3" height="1.3" fill="#3c93dc"/><rect x="505.75" y="429.15" width="1.3" height="1.3" fill="#3c93dc"/><path d="M510.10,433.20 L513.10,429.60" stroke="#f2a51d" stroke-width="1.6"/><path d="M512.50,430.30 L513.50,429.10" stroke="#e8403a" stroke-width="1.6"/><rect x="509.10" y="435.5" width="0.7" height="3.2" fill="#c9c9c9"/><path d="M520.05,433.30 L526.45,433.30 L527.55,432.10 L527.55,433.80 L520.05,433.80Z" fill="#cfcfcf"/><path d="M520.05,425.80 L521.15,424.40 L527.55,424.40 L527.55,432.10 L526.45,433.30 L520.05,433.30Z" fill="#5ea9e3"/><path d="M520.05,425.80 L521.15,424.40 L527.55,424.40 L526.45,425.80Z" fill="#8cc5ef"/><path d="M526.45,425.80 L527.55,424.40 L527.55,432.10 L526.45,433.30Z" fill="#3f8bd0"/><path d="M528.85,424.80 L528.85,431.30" stroke="#444" stroke-width="0.5"/><rect x="523.75" y="435.5" width="0.7" height="3.2" fill="#c9c9c9"/><rect x="533.50" y="424.30" width="8.2" height="8.2" fill="none" stroke="#8c8c8c" stroke-width="0.6"/><path d="M535.70,426.30 L539.20,426.30 C539.20,428.30 537.70,429.80 535.70,429.80Z" fill="none" stroke="#9a9a9a" stroke-width="0.5"/><rect x="532.85" y="423.65" width="1.3" height="1.3" fill="#3c93dc"/><rect x="541.05" y="423.65" width="1.3" height="1.3" fill="#3c93dc"/><rect x="532.85" y="431.85" width="1.3" height="1.3" fill="#3c93dc"/><rect x="535.05" y="425.65" width="1.3" height="1.3" fill="#3c93dc"/><rect x="538.55" y="425.65" width="1.3" height="1.3" fill="#3c93dc"/><rect x="535.05" y="429.15" width="1.3" height="1.3" fill="#3c93dc"/><path d="M539.40,433.20 L542.40,429.60" stroke="#f2a51d" stroke-width="1.6"/><path d="M541.80,430.30 L542.80,429.10" stroke="#e8403a" stroke-width="1.6"/><rect x="538.40" y="435.5" width="0.7" height="3.2" fill="#c9c9c9"/><path d="M548.05,426.40 L550.15,424.10 L552.85,424.10 C555.85,424.10 557.85,426.30 558.05,428.80 L558.05,431.30 L556.05,433.40 L548.05,433.40Z" fill="#dcdcdc" stroke="#9a9a9a" stroke-width="0.4"/><path d="M552.85,424.10 C555.85,424.10 557.85,426.30 558.05,428.80 L556.05,430.00 C555.85,427.80 554.35,426.20 552.05,426.10Z" fill="#4aa0e0"/><path d="M556.05,430.00 L558.05,428.80 L558.05,431.30 L556.05,433.40Z" fill="#c2c2c2"/><rect x="553.05" y="435.5" width="0.7" height="3.2" fill="#c9c9c9"/><path d="M567.50,424.00 L567.50,433.60 M562.70,428.80 L572.30,428.80" stroke="#333" stroke-width="0.8"/><path d="M567.50,423.80 L565.90,425.80 L569.10,425.80Z M567.50,433.80 L565.90,431.80 L569.10,431.80Z M562.50,428.80 L564.50,427.20 L564.50,430.40Z M572.50,428.80 L570.50,427.20 L570.50,430.40Z" fill="#333"/><rect x="567.70" y="435.5" width="0.7" height="3.2" fill="#c9c9c9"/><rect x="577.45" y="424.30" width="8.2" height="8.2" fill="none" stroke="#8c8c8c" stroke-width="0.6"/><path d="M579.65,426.30 L583.15,426.30 C583.15,428.30 581.65,429.80 579.65,429.80Z" fill="none" stroke="#9a9a9a" stroke-width="0.5"/><rect x="576.80" y="423.65" width="1.3" height="1.3" fill="#3c93dc"/><rect x="585.00" y="423.65" width="1.3" height="1.3" fill="#3c93dc"/><rect x="576.80" y="431.85" width="1.3" height="1.3" fill="#3c93dc"/><rect x="579.00" y="425.65" width="1.3" height="1.3" fill="#3c93dc"/><rect x="582.50" y="425.65" width="1.3" height="1.3" fill="#3c93dc"/><rect x="579.00" y="429.15" width="1.3" height="1.3" fill="#3c93dc"/><path d="M583.35,433.20 L586.35,429.60" stroke="#f2a51d" stroke-width="1.6"/><path d="M585.75,430.30 L586.75,429.10" stroke="#e8403a" stroke-width="1.6"/><rect x="582.35" y="435.5" width="0.7" height="3.2" fill="#c9c9c9"/><rect x="592.10" y="424.30" width="8.2" height="8.2" fill="none" stroke="#8c8c8c" stroke-width="0.6"/><path d="M594.30,426.30 L597.80,426.30 C597.80,428.30 596.30,429.80 594.30,429.80Z" fill="none" stroke="#9a9a9a" stroke-width="0.5"/><rect x="591.45" y="423.65" width="1.3" height="1.3" fill="#3c93dc"/><rect x="599.65" y="423.65" width="1.3" height="1.3" fill="#3c93dc"/><rect x="591.45" y="431.85" width="1.3" height="1.3" fill="#3c93dc"/><rect x="593.65" y="425.65" width="1.3" height="1.3" fill="#3c93dc"/><rect x="597.15" y="425.65" width="1.3" height="1.3" fill="#3c93dc"/><rect x="593.65" y="429.15" width="1.3" height="1.3" fill="#3c93dc"/><path d="M598.00,433.20 L601.00,429.60" stroke="#f2a51d" stroke-width="1.6"/><path d="M600.40,430.30 L601.40,429.10" stroke="#e8403a" stroke-width="1.6"/><rect x="597.00" y="435.5" width="0.7" height="3.2" fill="#c9c9c9"/><path d="M607.95,433.30 L614.35,433.30 L615.45,432.10 L615.45,433.80 L607.95,433.80Z" fill="#cfcfcf"/><path d="M607.95,425.80 L609.05,424.40 L615.45,424.40 L615.45,432.10 L614.35,433.30 L607.95,433.30Z" fill="#5ea9e3"/><path d="M607.95,425.80 L609.05,424.40 L615.45,424.40 L614.35,425.80Z" fill="#8cc5ef"/><path d="M614.35,425.80 L615.45,424.40 L615.45,432.10 L614.35,433.30Z" fill="#3f8bd0"/><path d="M616.75,424.80 L616.75,431.30" stroke="#444" stroke-width="0.5"/><rect x="611.65" y="435.5" width="0.7" height="3.2" fill="#c9c9c9"/><rect x="621.40" y="424.30" width="8.2" height="8.2" fill="none" stroke="#8c8c8c" stroke-width="0.6"/><path d="M623.60,426.30 L627.10,426.30 C627.10,428.30 625.60,429.80 623.60,429.80Z" fill="none" stroke="#9a9a9a" stroke-width="0.5"/><rect x="620.75" y="423.65" width="1.3" height="1.3" fill="#3c93dc"/><rect x="628.95" y="423.65" width="1.3" height="1.3" fill="#3c93dc"/><rect x="620.75" y="431.85" width="1.3" height="1.3" fill="#3c93dc"/><rect x="622.95" y="425.65" width="1.3" height="1.3" fill="#3c93dc"/><rect x="626.45" y="425.65" width="1.3" height="1.3" fill="#3c93dc"/><rect x="622.95" y="429.15" width="1.3" height="1.3" fill="#3c93dc"/><path d="M627.30,433.20 L630.30,429.60" stroke="#f2a51d" stroke-width="1.6"/><path d="M629.70,430.30 L630.70,429.10" stroke="#e8403a" stroke-width="1.6"/><rect x="626.30" y="435.5" width="0.7" height="3.2" fill="#c9c9c9"/><path d="M637.25,433.30 L643.65,433.30 L644.75,432.10 L644.75,433.80 L637.25,433.80Z" fill="#cfcfcf"/><path d="M637.25,425.80 L638.35,424.40 L644.75,424.40 L644.75,432.10 L643.65,433.30 L637.25,433.30Z" fill="#5ea9e3"/><path d="M637.25,425.80 L638.35,424.40 L644.75,424.40 L643.65,425.80Z" fill="#8cc5ef"/><path d="M643.65,425.80 L644.75,424.40 L644.75,432.10 L643.65,433.30Z" fill="#3f8bd0"/><path d="M646.05,424.80 L646.05,431.30" stroke="#444" stroke-width="0.5"/><rect x="640.95" y="435.5" width="0.7" height="3.2" fill="#c9c9c9"/><rect x="650.70" y="424.30" width="8.2" height="8.2" fill="none" stroke="#8c8c8c" stroke-width="0.6"/><path d="M652.90,426.30 L656.40,426.30 C656.40,428.30 654.90,429.80 652.90,429.80Z" fill="none" stroke="#9a9a9a" stroke-width="0.5"/><rect x="650.05" y="423.65" width="1.3" height="1.3" fill="#3c93dc"/><rect x="658.25" y="423.65" width="1.3" height="1.3" fill="#3c93dc"/><rect x="650.05" y="431.85" width="1.3" height="1.3" fill="#3c93dc"/><rect x="652.25" y="425.65" width="1.3" height="1.3" fill="#3c93dc"/><rect x="655.75" y="425.65" width="1.3" height="1.3" fill="#3c93dc"/><rect x="652.25" y="429.15" width="1.3" height="1.3" fill="#3c93dc"/><path d="M656.60,433.20 L659.60,429.60" stroke="#f2a51d" stroke-width="1.6"/><path d="M659.00,430.30 L660.00,429.10" stroke="#e8403a" stroke-width="1.6"/><rect x="655.60" y="435.5" width="0.7" height="3.2" fill="#c9c9c9"/><path d="M666.55,433.30 L672.95,433.30 L674.05,432.10 L674.05,433.80 L666.55,433.80Z" fill="#cfcfcf"/><path d="M666.55,425.80 L667.65,424.40 L674.05,424.40 L674.05,432.10 L672.95,433.30 L666.55,433.30Z" fill="#5ea9e3"/><path d="M666.55,425.80 L667.65,424.40 L674.05,424.40 L672.95,425.80Z" fill="#8cc5ef"/><path d="M672.95,425.80 L674.05,424.40 L674.05,432.10 L672.95,433.30Z" fill="#3f8bd0"/><path d="M675.35,424.80 L675.35,431.30" stroke="#444" stroke-width="0.5"/><rect x="670.25" y="435.5" width="0.7" height="3.2" fill="#c9c9c9"/><rect x="680.00" y="424.30" width="8.2" height="8.2" fill="none" stroke="#8c8c8c" stroke-width="0.6"/><path d="M682.20,426.30 L685.70,426.30 C685.70,428.30 684.20,429.80 682.20,429.80Z" fill="none" stroke="#9a9a9a" stroke-width="0.5"/><rect x="679.35" y="423.65" width="1.3" height="1.3" fill="#3c93dc"/><rect x="687.55" y="423.65" width="1.3" height="1.3" fill="#3c93dc"/><rect x="679.35" y="431.85" width="1.3" height="1.3" fill="#3c93dc"/><rect x="681.55" y="425.65" width="1.3" height="1.3" fill="#3c93dc"/><rect x="685.05" y="425.65" width="1.3" height="1.3" fill="#3c93dc"/><rect x="681.55" y="429.15" width="1.3" height="1.3" fill="#3c93dc"/><path d="M685.90,433.20 L688.90,429.60" stroke="#f2a51d" stroke-width="1.6"/><path d="M688.30,430.30 L689.30,429.10" stroke="#e8403a" stroke-width="1.6"/><rect x="684.90" y="435.5" width="0.7" height="3.2" fill="#c9c9c9"/><rect x="694.65" y="424.30" width="8.2" height="8.2" fill="none" stroke="#8c8c8c" stroke-width="0.6"/><path d="M696.85,426.30 L700.35,426.30 C700.35,428.30 698.85,429.80 696.85,429.80Z" fill="none" stroke="#9a9a9a" stroke-width="0.5"/><rect x="694.00" y="423.65" width="1.3" height="1.3" fill="#3c93dc"/><rect x="702.20" y="423.65" width="1.3" height="1.3" fill="#3c93dc"/><rect x="694.00" y="431.85" width="1.3" height="1.3" fill="#3c93dc"/><rect x="696.20" y="425.65" width="1.3" height="1.3" fill="#3c93dc"/><rect x="699.70" y="425.65" width="1.3" height="1.3" fill="#3c93dc"/><rect x="696.20" y="429.15" width="1.3" height="1.3" fill="#3c93dc"/><path d="M700.55,433.20 L703.55,429.60" stroke="#f2a51d" stroke-width="1.6"/><path d="M702.95,430.30 L703.95,429.10" stroke="#e8403a" stroke-width="1.6"/><rect x="699.55" y="435.5" width="0.7" height="3.2" fill="#c9c9c9"/><path d="M710.50,433.30 L716.90,433.30 L718.00,432.10 L718.00,433.80 L710.50,433.80Z" fill="#cfcfcf"/><path d="M710.50,425.80 L711.60,424.40 L718.00,424.40 L718.00,432.10 L716.90,433.30 L710.50,433.30Z" fill="#5ea9e3"/><path d="M710.50,425.80 L711.60,424.40 L718.00,424.40 L716.90,425.80Z" fill="#8cc5ef"/><path d="M716.90,425.80 L718.00,424.40 L718.00,432.10 L716.90,433.30Z" fill="#3f8bd0"/><path d="M719.30,424.80 L719.30,431.30" stroke="#444" stroke-width="0.5"/><rect x="714.20" y="435.5" width="0.7" height="3.2" fill="#c9c9c9"/><rect x="723.95" y="424.30" width="8.2" height="8.2" fill="none" stroke="#8c8c8c" stroke-width="0.6"/><path d="M726.15,426.30 L729.65,426.30 C729.65,428.30 728.15,429.80 726.15,429.80Z" fill="none" stroke="#9a9a9a" stroke-width="0.5"/><rect x="723.30" y="423.65" width="1.3" height="1.3" fill="#3c93dc"/><rect x="731.50" y="423.65" width="1.3" height="1.3" fill="#3c93dc"/><rect x="723.30" y="431.85" width="1.3" height="1.3" fill="#3c93dc"/><rect x="725.50" y="425.65" width="1.3" height="1.3" fill="#3c93dc"/><rect x="729.00" y="425.65" width="1.3" height="1.3" fill="#3c93dc"/><rect x="725.50" y="429.15" width="1.3" height="1.3" fill="#3c93dc"/><path d="M729.85,433.20 L732.85,429.60" stroke="#f2a51d" stroke-width="1.6"/><path d="M732.25,430.30 L733.25,429.10" stroke="#e8403a" stroke-width="1.6"/><rect x="728.85" y="435.5" width="0.7" height="3.2" fill="#c9c9c9"/><g transform="translate(753.2,430.6)"><circle r="3.3" fill="none" stroke="#8a8a8a" stroke-width="2.2"/><rect x="-1" y="-5.2" width="2" height="2.4" fill="#8a8a8a" transform="rotate(0)"/><rect x="-1" y="-5.2" width="2" height="2.4" fill="#8a8a8a" transform="rotate(45)"/><rect x="-1" y="-5.2" width="2" height="2.4" fill="#8a8a8a" transform="rotate(90)"/><rect x="-1" y="-5.2" width="2" height="2.4" fill="#8a8a8a" transform="rotate(135)"/><rect x="-1" y="-5.2" width="2" height="2.4" fill="#8a8a8a" transform="rotate(180)"/><rect x="-1" y="-5.2" width="2" height="2.4" fill="#8a8a8a" transform="rotate(225)"/><rect x="-1" y="-5.2" width="2" height="2.4" fill="#8a8a8a" transform="rotate(270)"/><rect x="-1" y="-5.2" width="2" height="2.4" fill="#8a8a8a" transform="rotate(315)"/></g><rect x="37.9" y="449.8" width="5.1" height="4.4" rx="1.3" fill="#3a3a3a"/><circle cx="693.3" cy="526.1" r="3.6" fill="#fff" stroke="#c4c4c4" stroke-width="0.6"/><circle cx="693.3" cy="526.1" r="1.6" fill="#222"/><circle cx="720.4" cy="526.1" r="3.6" fill="#fff" stroke="#c4c4c4" stroke-width="0.6"/><circle cx="746.4" cy="526.1" r="3.6" fill="#fff" stroke="#c4c4c4" stroke-width="0.6"/>
</svg>
</body></html>
